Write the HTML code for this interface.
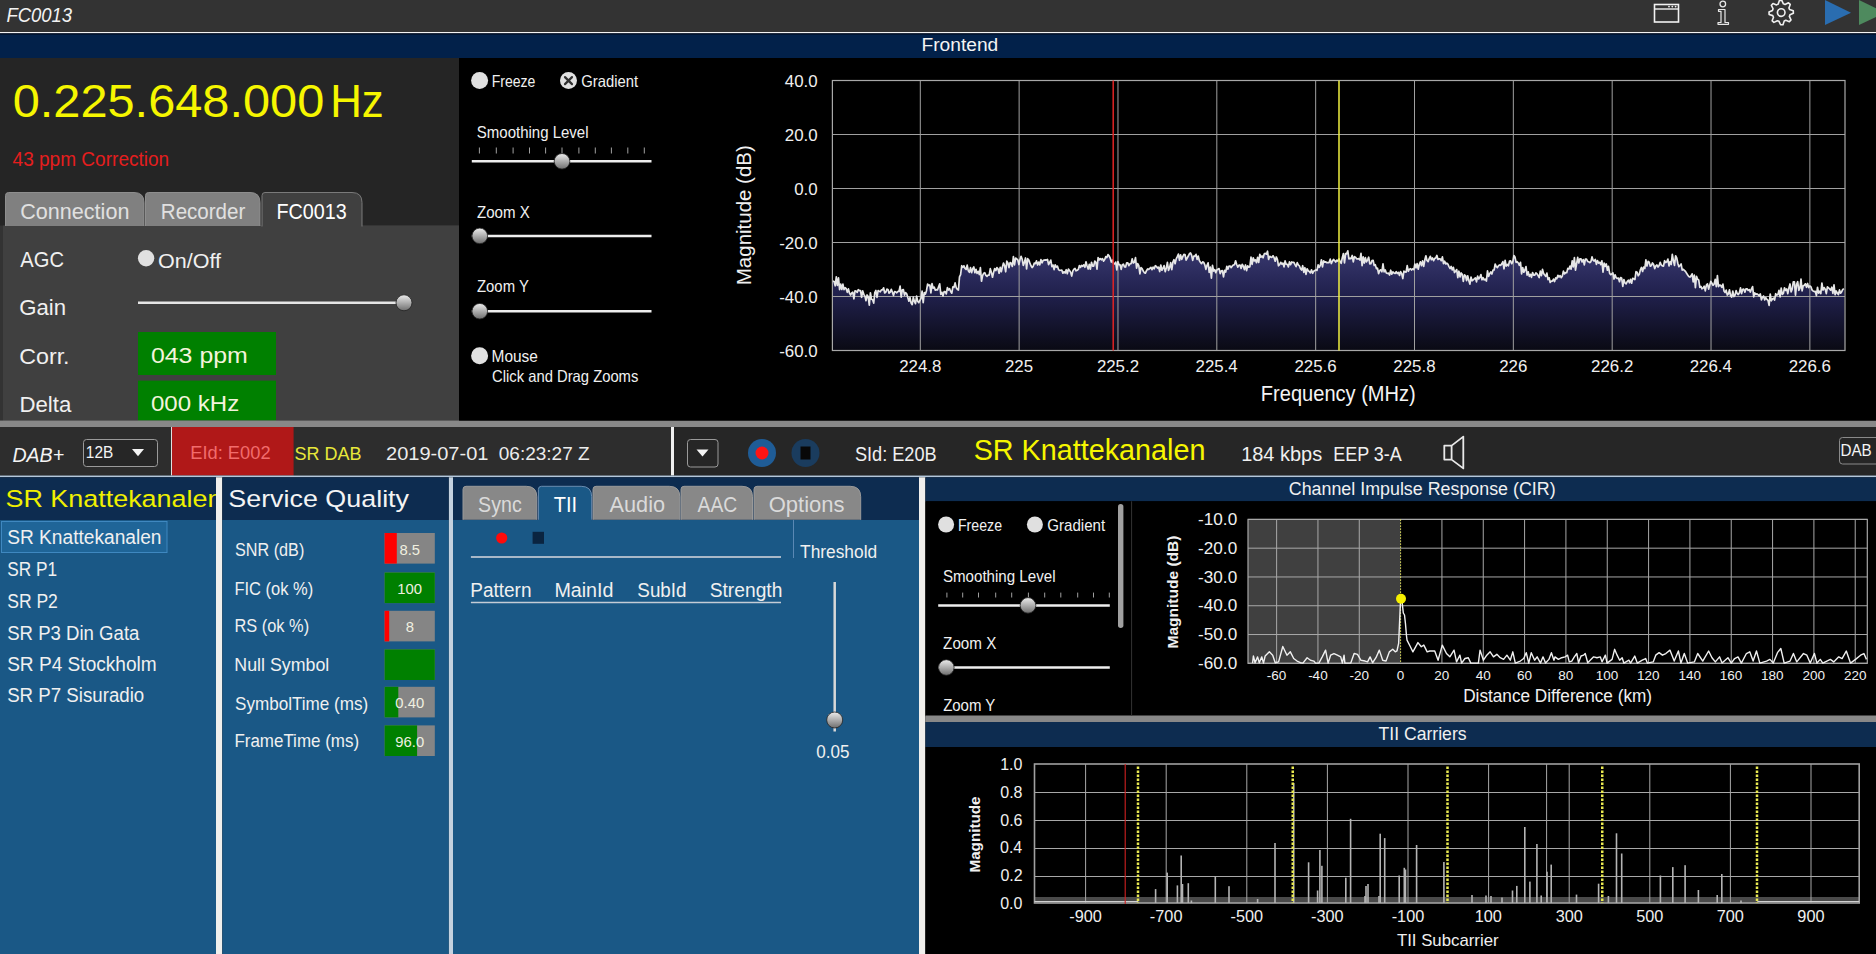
<!DOCTYPE html>
<html><head><meta charset="utf-8"><title>FC0013</title>
<style>html,body{margin:0;padding:0;background:#000;overflow:hidden;width:1876px;height:954px}
svg{display:block} text{font-family:"Liberation Sans",sans-serif;white-space:pre}</style></head>
<body><svg width="1876" height="954" viewBox="0 0 1876 954">
<rect x="0" y="0" width="1876" height="32" fill="#333333" />
<rect x="0" y="32" width="1876" height="1.5" fill="#f4f4f4" />
<rect x="0" y="33.5" width="1876" height="24.5" fill="#02214a" />
<rect x="0" y="33.5" width="1876" height="1" fill="#000a1a" />
<text x="6.43" y="22" font-size="20.35" fill="#f2f2f2" textLength="65.73" lengthAdjust="spacingAndGlyphs" font-style="italic" >FC0013</text>
<text x="921.43" y="50.8" font-size="18.9" fill="#f4f4f4" textLength="76.81" lengthAdjust="spacingAndGlyphs" >Frontend</text>
<rect x="1654.5" y="4.5" width="24" height="17.5" fill="none" stroke="#f2f2f2" stroke-width="1.6"/>
<line x1="1654.5" y1="9" x2="1678.5" y2="9" stroke="#f2f2f2" stroke-width="1.4"/>
<circle cx="1669" cy="6.6" r="0.9" fill="#f2f2f2" />
<circle cx="1672.3" cy="6.6" r="0.9" fill="#f2f2f2" />
<circle cx="1675.6" cy="6.6" r="0.9" fill="#f2f2f2" />
<circle cx="1722.8" cy="4" r="2.8" fill="none" stroke="#e8e8e8" stroke-width="1.3"/>
<path d="M1718.5 9.5 H1725 V22.5 H1728.5 V24.3 H1718 V22.5 H1721 V11.3 H1718.5 Z" fill="none" stroke="#e8e8e8" stroke-width="1.2" stroke-linejoin="round"/>
<path d="M1779.41 0.53 L1781.8 0.41 L1783.39 3.87 L1785.05 4.46 L1788.47 2.8 L1790.24 4.41 L1788.92 7.97 L1789.67 9.57 L1793.27 10.81 L1793.39 13.2 L1789.93 14.79 L1789.34 16.45 L1791 19.87 L1789.39 21.64 L1785.83 20.32 L1784.23 21.07 L1782.99 24.67 L1780.6 24.79 L1779.01 21.33 L1777.35 20.74 L1773.93 22.4 L1772.16 20.79 L1773.48 17.23 L1772.73 15.63 L1769.13 14.39 L1769.01 12 L1772.47 10.41 L1773.06 8.75 L1771.4 5.33 L1773.01 3.56 L1776.57 4.88 L1778.17 4.13 Z" fill="none" stroke="#f0f0f0" stroke-width="1.6" stroke-linejoin="round"/>
<circle cx="1781.2" cy="12.6" r="3.8" fill="none" stroke="#f0f0f0" stroke-width="1.6"/>
<path d="M1825 0 L1851 12.8 L1825 25 Z" fill="#2a6db0"/>
<path d="M1859 0 L1885 12.8 L1859 25 Z" fill="#4e8a5e"/>
<rect x="0" y="58" width="459" height="362.5" fill="#252525" />
<text x="12.7" y="117" font-size="45.79" fill="#f6f600" textLength="311.61" lengthAdjust="spacingAndGlyphs" >0.225.648.000</text>
<text x="330.2" y="117" font-size="45.79" fill="#f6f600" textLength="53.58" lengthAdjust="spacingAndGlyphs" >Hz</text>
<text x="12.56" y="166" font-size="19.77" fill="#e41e1e" textLength="156.67" lengthAdjust="spacingAndGlyphs" >43 ppm Correction</text>
<rect x="0" y="225.5" width="459" height="195" fill="#333333" />
<rect x="3" y="225.5" width="456" height="195" fill="#404040" />
<path d="M5.5 226 V195.5 Q5.5 192.5 8.5 192.5 H134 Q144 192.5 144 202.5 V226 Z" fill="#808080"/>
<path d="M5.5 226 V195.5 Q5.5 192.5 8.5 192.5 H134 Q144 192.5 144 202.5 V226" fill="none" stroke="#8e8e8e" stroke-width="1"/>
<path d="M145.5 226 V195.5 Q145.5 192.5 148.5 192.5 H250 Q260 192.5 260 202.5 V226 Z" fill="#808080"/>
<path d="M145.5 226 V195.5 Q145.5 192.5 148.5 192.5 H250 Q260 192.5 260 202.5 V226" fill="none" stroke="#8e8e8e" stroke-width="1"/>
<path d="M262 226.5 V195.5 Q262 192.5 265 192.5 H352 Q362 192.5 362 202.5 V226.5 Z" fill="#404040"/>
<path d="M262 226.5 V195.5 Q262 192.5 265 192.5 H352 Q362 192.5 362 202.5 V226.5" fill="none" stroke="#7a7a7a" stroke-width="1"/>
<text x="20.3" y="219" font-size="21.37" fill="#e0e0e0" textLength="109.1" lengthAdjust="spacingAndGlyphs" >Connection</text>
<text x="160.81" y="219" font-size="21.37" fill="#e0e0e0" textLength="84.53" lengthAdjust="spacingAndGlyphs" >Recorder</text>
<text x="276.38" y="219" font-size="21.37" fill="#ffffff" textLength="70.29" lengthAdjust="spacingAndGlyphs" >FC0013</text>
<text x="20.36" y="267" font-size="22.82" fill="#f0f0f0" textLength="43.61" lengthAdjust="spacingAndGlyphs" >AGC</text>
<circle cx="146.1" cy="258.3" r="8.2" fill="#e0e0e0" />
<text x="157.99" y="267.9" font-size="19.91" fill="#f0f0f0" textLength="62.98" lengthAdjust="spacingAndGlyphs" >On/Off</text>
<text x="19.28" y="314.9" font-size="22.82" fill="#f0f0f0" textLength="46.86" lengthAdjust="spacingAndGlyphs" >Gain</text>
<line x1="138" y1="302.8" x2="398" y2="302.8" stroke="#e6e6e6" stroke-width="2.6" />
<defs><linearGradient id="knob" x1="0" y1="0" x2="0" y2="1"><stop offset="0" stop-color="#ececec"/><stop offset="0.45" stop-color="#b4b4b4"/><stop offset="1" stop-color="#6e6e6e"/></linearGradient></defs>
<circle cx="404" cy="302.8" r="8" fill="url(#knob)" stroke="#222" stroke-width="0.8"/>
<rect x="138" y="332" width="138" height="43" fill="#008000" />
<rect x="138" y="380.6" width="138" height="40" fill="#008000" />
<text x="19.25" y="363.6" font-size="21.22" fill="#f0f0f0" textLength="50.32" lengthAdjust="spacingAndGlyphs" >Corr.</text>
<text x="19.48" y="411.7" font-size="21.8" fill="#f0f0f0" textLength="51.82" lengthAdjust="spacingAndGlyphs" >Delta</text>
<text x="150.93" y="362.6" font-size="21.8" fill="#f4f4dc" textLength="96.91" lengthAdjust="spacingAndGlyphs" >043 ppm</text>
<text x="150.96" y="410.8" font-size="21.8" fill="#f4f4dc" textLength="88.24" lengthAdjust="spacingAndGlyphs" >000 kHz</text>
<rect x="0" y="420.5" width="1876" height="6.5" fill="#888888" />
<rect x="459" y="58" width="1417" height="362.5" fill="#000000" />
<circle cx="479.6" cy="80.6" r="8.5" fill="#e0e0e0" />
<text x="491.65" y="86.9" font-size="16.72" fill="#f0f0f0" textLength="43.78" lengthAdjust="spacingAndGlyphs" >Freeze</text>
<circle cx="568.5" cy="80.6" r="8.5" fill="#e0e0e0" />
<path d="M565 77.1 L572 84.1 M572 77.1 L565 84.1" stroke="#303030" stroke-width="2.2" stroke-linecap="round"/>
<text x="581.25" y="86.9" font-size="16.72" fill="#f0f0f0" textLength="56.85" lengthAdjust="spacingAndGlyphs" >Gradient</text>
<text x="476.82" y="138.4" font-size="16.72" fill="#f0f0f0" textLength="111.68" lengthAdjust="spacingAndGlyphs" >Smoothing Level</text>
<line x1="479.4" y1="147.5" x2="479.4" y2="153.5" stroke="#a0a0a0" stroke-width="1" />
<line x1="496.3" y1="147.5" x2="496.3" y2="153.5" stroke="#a0a0a0" stroke-width="1" />
<line x1="513.1" y1="147.5" x2="513.1" y2="153.5" stroke="#a0a0a0" stroke-width="1" />
<line x1="529.5" y1="147.5" x2="529.5" y2="153.5" stroke="#a0a0a0" stroke-width="1" />
<line x1="545.6" y1="147.5" x2="545.6" y2="153.5" stroke="#a0a0a0" stroke-width="1" />
<line x1="562" y1="147.5" x2="562" y2="153.5" stroke="#a0a0a0" stroke-width="1" />
<line x1="578.9" y1="147.5" x2="578.9" y2="153.5" stroke="#a0a0a0" stroke-width="1" />
<line x1="595.3" y1="147.5" x2="595.3" y2="153.5" stroke="#a0a0a0" stroke-width="1" />
<line x1="611.4" y1="147.5" x2="611.4" y2="153.5" stroke="#a0a0a0" stroke-width="1" />
<line x1="627.8" y1="147.5" x2="627.8" y2="153.5" stroke="#a0a0a0" stroke-width="1" />
<line x1="644.3" y1="147.5" x2="644.3" y2="153.5" stroke="#a0a0a0" stroke-width="1" />
<line x1="471.8" y1="161.3" x2="651.5" y2="161.3" stroke="#eeeeee" stroke-width="2.5" />
<circle cx="562" cy="161.3" r="7.8" fill="url(#knob)" stroke="#222" stroke-width="0.8"/>
<text x="477.02" y="217.5" font-size="16.72" fill="#f0f0f0" textLength="52.8" lengthAdjust="spacingAndGlyphs" >Zoom X</text>
<line x1="471.8" y1="235.9" x2="651.5" y2="235.9" stroke="#eeeeee" stroke-width="2.5" />
<circle cx="479.8" cy="235.9" r="7.8" fill="url(#knob)" stroke="#222" stroke-width="0.8"/>
<text x="477.03" y="292" font-size="16.72" fill="#f0f0f0" textLength="51.79" lengthAdjust="spacingAndGlyphs" >Zoom Y</text>
<line x1="471.8" y1="311.2" x2="651.5" y2="311.2" stroke="#eeeeee" stroke-width="2.5" />
<circle cx="479.8" cy="311.2" r="7.8" fill="url(#knob)" stroke="#222" stroke-width="0.8"/>
<circle cx="479.6" cy="355.8" r="8.5" fill="#e0e0e0" />
<text x="491.53" y="361.7" font-size="16.72" fill="#f0f0f0" textLength="46.35" lengthAdjust="spacingAndGlyphs" >Mouse</text>
<text x="492.05" y="382" font-size="16.72" fill="#f0f0f0" textLength="146.29" lengthAdjust="spacingAndGlyphs" >Click and Drag Zooms</text>
<text x="0" y="0" font-size="20.3" fill="#f0f0f0" textLength="140" lengthAdjust="spacingAndGlyphs" text-anchor="middle" transform="translate(750.5 215.2) rotate(-90)">Magnitude (dB)</text>
<defs><linearGradient id="spg" x1="0" y1="250" x2="0" y2="350" gradientUnits="userSpaceOnUse"><stop offset="0" stop-color="#38386f"/><stop offset="0.45" stop-color="#20204c"/><stop offset="1" stop-color="#0a0a14"/></linearGradient></defs>
<path d="M833 281.04 L834.1 281.5 L835.2 285.78 L836.3 276.86 L837.4 285.48 L838.5 277.95 L839.6 289.65 L840.7 284.19 L841.8 289.47 L842.9 284.18 L844 289.56 L845.1 287.73 L846.2 288.73 L847.3 292.35 L848.4 288.92 L849.5 293.18 L850.6 295.1 L851.7 292.92 L852.8 292.13 L853.9 298.78 L855 290.83 L856.1 291.04 L857.2 292.34 L858.3 289.69 L859.4 290.65 L860.5 290.61 L861.6 297.28 L862.7 290.9 L863.8 294.38 L864.9 296.13 L866 300.71 L867.1 294.97 L868.2 296.78 L869.3 305.06 L870.4 292.75 L871.5 299.32 L872.6 299.71 L873.7 303.11 L874.8 292.63 L875.9 290.51 L877 297.47 L878.1 290.56 L879.2 291.27 L880.3 291.8 L881.4 289.93 L882.5 289.97 L883.6 287.77 L884.7 292.98 L885.8 292.34 L886.9 289.19 L888 289.46 L889.1 293.14 L890.2 292.15 L891.3 289.29 L892.4 292.21 L893.5 295.52 L894.6 291.52 L895.7 291.84 L896.8 292.79 L897.9 291.47 L899 291.51 L900.1 286.11 L901.2 297.14 L902.3 289.9 L903.4 289.63 L904.5 295.15 L905.6 292.62 L906.7 293.75 L907.8 297.47 L908.9 301.14 L910 297.44 L911.1 303.11 L912.2 304.66 L913.3 297.21 L914.4 301.44 L915.5 303.67 L916.6 296.09 L917.7 301.27 L918.8 302.72 L919.9 300.41 L921 298.5 L922.1 291.06 L923.2 302.58 L924.3 292.51 L925.4 293.98 L926.5 290.67 L927.6 284.11 L928.7 285.52 L929.8 284.91 L930.9 293.01 L932 283.53 L933.1 288.17 L934.2 287.14 L935.3 290.11 L936.4 289.68 L937.5 289.98 L938.6 286.81 L939.7 283.91 L940.8 294.37 L941.9 292.31 L943 295.97 L944.1 291.66 L945.2 291.61 L946.3 293.98 L947.4 287.57 L948.5 290 L949.6 288.7 L950.7 291.48 L951.8 293.22 L952.9 286.83 L954 287.32 L955.1 282.91 L956.2 287.67 L957.3 289.21 L958.4 290.06 L959.5 276.92 L960.6 274.66 L961.7 265.73 L962.8 267.4 L963.9 265.78 L965 268.35 L966.1 269.49 L967.2 265.14 L968.3 270.82 L969.4 272.29 L970.5 267.58 L971.6 272.67 L972.7 268.72 L973.8 266.96 L974.9 272.76 L976 269.28 L977.1 273.41 L978.2 271.31 L979.3 274.55 L980.4 267.71 L981.5 281.21 L982.6 275.7 L983.7 273.25 L984.8 272.75 L985.9 275.36 L987 276.27 L988.1 275.19 L989.2 275.21 L990.3 268.7 L991.4 272.41 L992.5 277.23 L993.6 272.32 L994.7 268.54 L995.8 270.61 L996.9 267.64 L998 268.74 L999.1 273.22 L1000.2 267.31 L1001.3 271.69 L1002.4 267.02 L1003.5 263.06 L1004.6 265.62 L1005.7 271.78 L1006.8 261.11 L1007.9 262.84 L1009 267.68 L1010.1 262.58 L1011.2 263.29 L1012.3 266.45 L1013.4 256.49 L1014.5 264.82 L1015.6 258.05 L1016.7 258.84 L1017.8 259.89 L1018.9 264.52 L1020 259.5 L1021.1 256.4 L1022.2 259.23 L1023.3 265.44 L1024.4 262.41 L1025.5 257.96 L1026.6 268.98 L1027.7 258.7 L1028.8 260.12 L1029.9 263.13 L1031 265.8 L1032.1 267.61 L1033.2 266.17 L1034.3 263.09 L1035.4 263.69 L1036.5 260.85 L1037.6 265.03 L1038.7 262.04 L1039.8 264.82 L1040.9 259.63 L1042 262.83 L1043.1 260.56 L1044.2 260.04 L1045.3 259.9 L1046.4 260.04 L1047.5 259.48 L1048.6 264.55 L1049.7 262.36 L1050.8 260.12 L1051.9 266.62 L1053 265.03 L1054.1 269.58 L1055.2 264.77 L1056.3 267.13 L1057.4 266.1 L1058.5 269.53 L1059.6 270.44 L1060.7 270.27 L1061.8 270.14 L1062.9 273.22 L1064 271.7 L1065.1 273.02 L1066.2 269.71 L1067.3 273.75 L1068.4 269.13 L1069.5 270.5 L1070.6 272.11 L1071.7 276.03 L1072.8 271.1 L1073.9 269.11 L1075 268.37 L1076.1 270.82 L1077.2 270.33 L1078.3 269.42 L1079.4 265.52 L1080.5 267.45 L1081.6 265.45 L1082.7 266.33 L1083.8 264.86 L1084.9 267.26 L1086 261.76 L1087.1 266.06 L1088.2 269.03 L1089.3 264.31 L1090.4 269.22 L1091.5 262.29 L1092.6 266.06 L1093.7 266.03 L1094.8 261.11 L1095.9 262.26 L1097 269.17 L1098.1 257.51 L1099.2 259.86 L1100.3 258.56 L1101.4 259.77 L1102.5 258.59 L1103.6 261.13 L1104.7 259.49 L1105.8 256.58 L1106.9 257.55 L1108 254.66 L1109.1 255.78 L1110.2 258.09 L1111.3 262.05 L1112.4 260.1 L1113.5 263.48 L1114.6 263.93 L1115.7 262.06 L1116.8 269.87 L1117.9 261.61 L1119 264.66 L1120.1 264.88 L1121.2 269.34 L1122.3 264.66 L1123.4 264.16 L1124.5 266.8 L1125.6 267.03 L1126.7 262.8 L1127.8 262.87 L1128.9 265.61 L1130 263.75 L1131.1 263.57 L1132.2 258.75 L1133.3 263.02 L1134.4 262.36 L1135.5 257.59 L1136.6 268.13 L1137.7 263.54 L1138.8 265.61 L1139.9 273.89 L1141 267.51 L1142.1 268.51 L1143.2 271 L1144.3 272.61 L1145.4 273.14 L1146.5 270.68 L1147.6 268.94 L1148.7 269.34 L1149.8 268.28 L1150.9 267.34 L1152 269.72 L1153.1 267.1 L1154.2 268.79 L1155.3 265.68 L1156.4 266.4 L1157.5 267.99 L1158.6 267.15 L1159.7 271.54 L1160.8 265.01 L1161.9 270.24 L1163 268.3 L1164.1 265.6 L1165.2 271.66 L1166.3 267.95 L1167.4 262.39 L1168.5 270.32 L1169.6 267.68 L1170.7 262.65 L1171.8 269.54 L1172.9 262.16 L1174 259.67 L1175.1 263.74 L1176.2 258.88 L1177.3 256.63 L1178.4 254.13 L1179.5 260.27 L1180.6 254.95 L1181.7 259.41 L1182.8 256.67 L1183.9 254.44 L1185 254.52 L1186.1 260.14 L1187.2 258.01 L1188.3 256.02 L1189.4 253.76 L1190.5 253 L1191.6 255.14 L1192.7 260.37 L1193.8 256.14 L1194.9 256.06 L1196 254.34 L1197.1 259.4 L1198.2 256.05 L1199.3 260.47 L1200.4 262.2 L1201.5 263.68 L1202.6 261.9 L1203.7 262.29 L1204.8 264.81 L1205.9 269.35 L1207 265.31 L1208.1 262.87 L1209.2 272.44 L1210.3 267.1 L1211.4 278.19 L1212.5 265.31 L1213.6 271.03 L1214.7 269.6 L1215.8 272.6 L1216.9 269.91 L1218 269.05 L1219.1 268.67 L1220.2 273.66 L1221.3 270.79 L1222.4 270.69 L1223.5 276.79 L1224.6 270.36 L1225.7 272.01 L1226.8 266.29 L1227.9 269.14 L1229 265.98 L1230.1 266.04 L1231.2 267.66 L1232.3 265.96 L1233.4 265.01 L1234.5 264.63 L1235.6 260.78 L1236.7 264.45 L1237.8 267.12 L1238.9 265.04 L1240 265.11 L1241.1 268.45 L1242.2 264.26 L1243.3 266.2 L1244.4 269.57 L1245.5 264.96 L1246.6 270.58 L1247.7 265.84 L1248.8 267.19 L1249.9 266.63 L1251 257.02 L1252.1 264.3 L1253.2 257.82 L1254.3 260.84 L1255.4 259.81 L1256.5 262.64 L1257.6 257.41 L1258.7 262.49 L1259.8 254.36 L1260.9 257.19 L1262 255.94 L1263.1 257.82 L1264.2 254.04 L1265.3 253.32 L1266.4 254.19 L1267.5 251.23 L1268.6 259.5 L1269.7 256.26 L1270.8 257.14 L1271.9 257.3 L1273 255.79 L1274.1 257.67 L1275.2 261.25 L1276.3 256.96 L1277.4 259.29 L1278.5 265.78 L1279.6 264.61 L1280.7 262.3 L1281.8 264.15 L1282.9 263.05 L1284 266.86 L1285.1 260.91 L1286.2 264.16 L1287.3 264.33 L1288.4 266.88 L1289.5 261.76 L1290.6 264.65 L1291.7 261.97 L1292.8 262.43 L1293.9 262.45 L1295 264.7 L1296.1 266.64 L1297.2 262.6 L1298.3 264.93 L1299.4 265.81 L1300.5 268.79 L1301.6 270.06 L1302.7 265.73 L1303.8 272.3 L1304.9 267.74 L1306 274.44 L1307.1 268.78 L1308.2 270.74 L1309.3 271.42 L1310.4 272.93 L1311.5 269.75 L1312.6 273.28 L1313.7 271.18 L1314.8 270.48 L1315.9 269.9 L1317 270.39 L1318.1 264.85 L1319.2 267.31 L1320.3 265.44 L1321.4 259.74 L1322.5 266.94 L1323.6 260.94 L1324.7 262.14 L1325.8 261.83 L1326.9 262.76 L1328 262.58 L1329.1 262.6 L1330.2 259.16 L1331.3 263.52 L1332.4 261.18 L1333.5 259.45 L1334.6 260.59 L1335.7 262.03 L1336.8 260.25 L1337.9 261.08 L1339 258.87 L1340.1 261.79 L1341.2 263.29 L1342.3 257.76 L1343.4 253.58 L1344.5 262.99 L1345.6 253.66 L1346.7 253.82 L1347.8 250.84 L1348.9 258.88 L1350 258.31 L1351.1 258.56 L1352.2 255.44 L1353.3 261.93 L1354.4 256.65 L1355.5 257.22 L1356.6 258.82 L1357.7 258.83 L1358.8 258.66 L1359.9 260.02 L1361 253.41 L1362.1 265.69 L1363.2 256.87 L1364.3 263.03 L1365.4 257.66 L1366.5 261.93 L1367.6 259.84 L1368.7 257.18 L1369.8 263.91 L1370.9 263.77 L1372 260.58 L1373.1 260.3 L1374.2 265.47 L1375.3 264.71 L1376.4 268.63 L1377.5 268.24 L1378.6 273.61 L1379.7 270.41 L1380.8 269.83 L1381.9 271.81 L1383 263.91 L1384.1 271.93 L1385.2 269.89 L1386.3 272.92 L1387.4 273.34 L1388.5 273.04 L1389.6 275.03 L1390.7 270.21 L1391.8 274.24 L1392.9 271.9 L1394 272.98 L1395.1 273.45 L1396.2 271.74 L1397.3 273.54 L1398.4 272.36 L1399.5 275.46 L1400.6 271.58 L1401.7 273.67 L1402.8 278.53 L1403.9 271.16 L1405 271.95 L1406.1 272.04 L1407.2 265.64 L1408.3 271.28 L1409.4 269.18 L1410.5 268.71 L1411.6 270.01 L1412.7 268.78 L1413.8 269.7 L1414.9 264.01 L1416 267.85 L1417.1 263.65 L1418.2 269.21 L1419.3 264.51 L1420.4 261.89 L1421.5 265.74 L1422.6 260.85 L1423.7 266.4 L1424.8 260.03 L1425.9 255.79 L1427 260.5 L1428.1 261.67 L1429.2 258.6 L1430.3 256.26 L1431.4 259.67 L1432.5 258.01 L1433.6 260.61 L1434.7 258.39 L1435.8 257.91 L1436.9 255.42 L1438 259.41 L1439.1 258.83 L1440.2 258.92 L1441.3 260.71 L1442.4 256.87 L1443.5 263.54 L1444.6 261.15 L1445.7 263.93 L1446.8 263.18 L1447.9 264.17 L1449 266.6 L1450.1 268.53 L1451.2 266.39 L1452.3 270 L1453.4 267.38 L1454.5 272.52 L1455.6 271.24 L1456.7 269.56 L1457.8 277.68 L1458.9 271.23 L1460 276.96 L1461.1 272.93 L1462.2 274.35 L1463.3 281.32 L1464.4 274.86 L1465.5 275.72 L1466.6 280.64 L1467.7 275.8 L1468.8 280.55 L1469.9 284.11 L1471 277.01 L1472.1 280.76 L1473.2 279.81 L1474.3 278.89 L1475.4 277.81 L1476.5 281.89 L1477.6 276.17 L1478.7 278.84 L1479.8 277.5 L1480.9 274.52 L1482 279.79 L1483.1 277.74 L1484.2 279.9 L1485.3 279.13 L1486.4 281.13 L1487.5 270.85 L1488.6 276.41 L1489.7 273.71 L1490.8 272.02 L1491.9 274.07 L1493 270.2 L1494.1 270.03 L1495.2 264.02 L1496.3 266.56 L1497.4 267.6 L1498.5 265.7 L1499.6 264.94 L1500.7 265.35 L1501.8 263.88 L1502.9 261.57 L1504 268.77 L1505.1 260.28 L1506.2 266.16 L1507.3 264.38 L1508.4 265.85 L1509.5 261.14 L1510.6 260.84 L1511.7 263.72 L1512.8 261.82 L1513.9 255.59 L1515 257.11 L1516.1 262.37 L1517.2 261.74 L1518.3 263 L1519.4 265.35 L1520.5 262.26 L1521.6 273.87 L1522.7 267.5 L1523.8 272.24 L1524.9 270.13 L1526 266.51 L1527.1 275.08 L1528.2 271.77 L1529.3 276.35 L1530.4 274.34 L1531.5 277.33 L1532.6 272.53 L1533.7 275.21 L1534.8 275.12 L1535.9 272.83 L1537 273.78 L1538.1 275.6 L1539.2 277.71 L1540.3 271.1 L1541.4 275.59 L1542.5 269.36 L1543.6 273.46 L1544.7 275.05 L1545.8 276.33 L1546.9 273.12 L1548 279.57 L1549.1 277.78 L1550.2 282.46 L1551.3 281 L1552.4 281.11 L1553.5 279.08 L1554.6 281.56 L1555.7 277.88 L1556.8 278.77 L1557.9 275.35 L1559 276.98 L1560.1 275.55 L1561.2 277.71 L1562.3 276.07 L1563.4 271.11 L1564.5 273.97 L1565.6 272.61 L1566.7 272.69 L1567.8 268.49 L1568.9 269.12 L1570 266.09 L1571.1 269.14 L1572.2 260.77 L1573.3 266.94 L1574.4 257.69 L1575.5 270.07 L1576.6 263.74 L1577.7 257.38 L1578.8 262.97 L1579.9 258.73 L1581 258.81 L1582.1 261.97 L1583.2 259.53 L1584.3 264.9 L1585.4 259 L1586.5 258.99 L1587.6 261.39 L1588.7 261.76 L1589.8 262.64 L1590.9 261.57 L1592 256.86 L1593.1 260.15 L1594.2 261.03 L1595.3 259.41 L1596.4 264.35 L1597.5 260.61 L1598.6 263.06 L1599.7 262.33 L1600.8 264.51 L1601.9 260.87 L1603 272.2 L1604.1 263.04 L1605.2 266.5 L1606.3 263.93 L1607.4 270.25 L1608.5 266.31 L1609.6 273.17 L1610.7 274.7 L1611.8 274.1 L1612.9 272.94 L1614 279.02 L1615.1 274.79 L1616.2 277.72 L1617.3 278.42 L1618.4 278.1 L1619.5 281.73 L1620.6 277.5 L1621.7 278.29 L1622.8 286.39 L1623.9 279.56 L1625 282.95 L1626.1 283.89 L1627.2 281.57 L1628.3 280.27 L1629.4 282.75 L1630.5 279.38 L1631.6 283.23 L1632.7 278.28 L1633.8 278.72 L1634.9 279.56 L1636 271.61 L1637.1 272.25 L1638.2 275.77 L1639.3 274.18 L1640.4 269.84 L1641.5 267.4 L1642.6 271.5 L1643.7 267.07 L1644.8 268.52 L1645.9 259.87 L1647 266.03 L1648.1 261.35 L1649.2 262.26 L1650.3 266.16 L1651.4 265.48 L1652.5 262.91 L1653.6 264.57 L1654.7 268.56 L1655.8 265.85 L1656.9 264.99 L1658 267.06 L1659.1 265.48 L1660.2 262.37 L1661.3 265.01 L1662.4 265.92 L1663.5 266.03 L1664.6 260.73 L1665.7 262.62 L1666.8 261.9 L1667.9 259.07 L1669 265.95 L1670.1 261.62 L1671.2 264.53 L1672.3 254.29 L1673.4 260.62 L1674.5 265.34 L1675.6 255.74 L1676.7 257.79 L1677.8 263.21 L1678.9 266.64 L1680 265.48 L1681.1 263.9 L1682.2 270.09 L1683.3 269.41 L1684.4 270.48 L1685.5 271.42 L1686.6 273.32 L1687.7 274.92 L1688.8 276.53 L1689.9 277.09 L1691 275.89 L1692.1 273.8 L1693.2 281.97 L1694.3 275.14 L1695.4 287.75 L1696.5 276.3 L1697.6 279.31 L1698.7 279.96 L1699.8 287.27 L1700.9 286.42 L1702 288.81 L1703.1 288.07 L1704.2 286.13 L1705.3 290.85 L1706.4 285.09 L1707.5 283.83 L1708.6 289.2 L1709.7 285.24 L1710.8 281.37 L1711.9 283.27 L1713 285.31 L1714.1 284.13 L1715.2 279.34 L1716.3 286.7 L1717.4 275.66 L1718.5 286.56 L1719.6 285 L1720.7 285.41 L1721.8 287.38 L1722.9 284.15 L1724 290.93 L1725.1 292.5 L1726.2 290.12 L1727.3 295.03 L1728.4 293.96 L1729.5 289.84 L1730.6 295.83 L1731.7 297.18 L1732.8 291.13 L1733.9 296.6 L1735 295.14 L1736.1 290.61 L1737.2 293.54 L1738.3 294.51 L1739.4 292.74 L1740.5 287.91 L1741.6 293.59 L1742.7 289.29 L1743.8 289.22 L1744.9 292.12 L1746 288.84 L1747.1 288.75 L1748.2 290.43 L1749.3 289.59 L1750.4 292.09 L1751.5 288.77 L1752.6 286.56 L1753.7 296.83 L1754.8 292.89 L1755.9 294.42 L1757 293.8 L1758.1 294.71 L1759.2 295.99 L1760.3 293.97 L1761.4 299.95 L1762.5 297.2 L1763.6 296.01 L1764.7 300 L1765.8 297.64 L1766.9 299.31 L1768 300.33 L1769.1 305.44 L1770.2 294 L1771.3 300.8 L1772.4 298.97 L1773.5 298.07 L1774.6 300.2 L1775.7 293.73 L1776.8 295.01 L1777.9 294.52 L1779 290.27 L1780.1 296.97 L1781.2 288.05 L1782.3 294.47 L1783.4 293.41 L1784.5 287.76 L1785.6 290.44 L1786.7 288.91 L1787.8 293.7 L1788.9 287.97 L1790 283.99 L1791.1 292 L1792.2 289.08 L1793.3 281.81 L1794.4 281.81 L1795.5 295.23 L1796.6 284.43 L1797.7 281.69 L1798.8 290.41 L1799.9 288.44 L1801 278.98 L1802.1 290.94 L1803.2 285.71 L1804.3 285.35 L1805.4 283.79 L1806.5 287.27 L1807.6 283.49 L1808.7 287.6 L1809.8 285.9 L1810.9 286.67 L1812 289.86 L1813.1 291.02 L1814.2 291.57 L1815.3 291.44 L1816.4 295.58 L1817.5 287.24 L1818.6 293.18 L1819.7 291.26 L1820.8 293.57 L1821.9 283 L1823 290.07 L1824.1 287.61 L1825.2 289.13 L1826.3 293.6 L1827.4 286.76 L1828.5 287.82 L1829.6 288.87 L1830.7 290.18 L1831.8 287.19 L1832.9 293.43 L1834 284.84 L1835.1 294.69 L1836.2 290.97 L1837.3 293.24 L1838.4 294.51 L1839.5 289.91 L1840.6 293.18 L1841.7 291.71 L1842.8 289.4 L1843.9 288.71 L1845 350.5 L833 350.5 Z" fill="url(#spg)"/>
<line x1="832.4" y1="80.5" x2="1845" y2="80.5" stroke="#a0a0a0" stroke-width="1" />
<line x1="832.4" y1="134.5" x2="1845" y2="134.5" stroke="#a0a0a0" stroke-width="1" />
<line x1="832.4" y1="188.5" x2="1845" y2="188.5" stroke="#a0a0a0" stroke-width="1" />
<line x1="832.4" y1="242.5" x2="1845" y2="242.5" stroke="#a0a0a0" stroke-width="1" />
<line x1="832.4" y1="296.5" x2="1845" y2="296.5" stroke="#a0a0a0" stroke-width="1" />
<line x1="832.4" y1="350.5" x2="1845" y2="350.5" stroke="#a0a0a0" stroke-width="1" />
<line x1="920.3" y1="80.5" x2="920.3" y2="350.5" stroke="#a0a0a0" stroke-width="1" />
<line x1="1019.14" y1="80.5" x2="1019.14" y2="350.5" stroke="#a0a0a0" stroke-width="1" />
<line x1="1117.98" y1="80.5" x2="1117.98" y2="350.5" stroke="#a0a0a0" stroke-width="1" />
<line x1="1216.82" y1="80.5" x2="1216.82" y2="350.5" stroke="#a0a0a0" stroke-width="1" />
<line x1="1315.66" y1="80.5" x2="1315.66" y2="350.5" stroke="#a0a0a0" stroke-width="1" />
<line x1="1414.5" y1="80.5" x2="1414.5" y2="350.5" stroke="#a0a0a0" stroke-width="1" />
<line x1="1513.34" y1="80.5" x2="1513.34" y2="350.5" stroke="#a0a0a0" stroke-width="1" />
<line x1="1612.18" y1="80.5" x2="1612.18" y2="350.5" stroke="#a0a0a0" stroke-width="1" />
<line x1="1711.02" y1="80.5" x2="1711.02" y2="350.5" stroke="#a0a0a0" stroke-width="1" />
<line x1="1809.86" y1="80.5" x2="1809.86" y2="350.5" stroke="#a0a0a0" stroke-width="1" />
<rect x="832.4" y="80.5" width="1012.6" height="270" fill="none" stroke="#a8a8a8" stroke-width="1.2"/>
<path d="M833 281.04 L834.1 281.5 L835.2 285.78 L836.3 276.86 L837.4 285.48 L838.5 277.95 L839.6 289.65 L840.7 284.19 L841.8 289.47 L842.9 284.18 L844 289.56 L845.1 287.73 L846.2 288.73 L847.3 292.35 L848.4 288.92 L849.5 293.18 L850.6 295.1 L851.7 292.92 L852.8 292.13 L853.9 298.78 L855 290.83 L856.1 291.04 L857.2 292.34 L858.3 289.69 L859.4 290.65 L860.5 290.61 L861.6 297.28 L862.7 290.9 L863.8 294.38 L864.9 296.13 L866 300.71 L867.1 294.97 L868.2 296.78 L869.3 305.06 L870.4 292.75 L871.5 299.32 L872.6 299.71 L873.7 303.11 L874.8 292.63 L875.9 290.51 L877 297.47 L878.1 290.56 L879.2 291.27 L880.3 291.8 L881.4 289.93 L882.5 289.97 L883.6 287.77 L884.7 292.98 L885.8 292.34 L886.9 289.19 L888 289.46 L889.1 293.14 L890.2 292.15 L891.3 289.29 L892.4 292.21 L893.5 295.52 L894.6 291.52 L895.7 291.84 L896.8 292.79 L897.9 291.47 L899 291.51 L900.1 286.11 L901.2 297.14 L902.3 289.9 L903.4 289.63 L904.5 295.15 L905.6 292.62 L906.7 293.75 L907.8 297.47 L908.9 301.14 L910 297.44 L911.1 303.11 L912.2 304.66 L913.3 297.21 L914.4 301.44 L915.5 303.67 L916.6 296.09 L917.7 301.27 L918.8 302.72 L919.9 300.41 L921 298.5 L922.1 291.06 L923.2 302.58 L924.3 292.51 L925.4 293.98 L926.5 290.67 L927.6 284.11 L928.7 285.52 L929.8 284.91 L930.9 293.01 L932 283.53 L933.1 288.17 L934.2 287.14 L935.3 290.11 L936.4 289.68 L937.5 289.98 L938.6 286.81 L939.7 283.91 L940.8 294.37 L941.9 292.31 L943 295.97 L944.1 291.66 L945.2 291.61 L946.3 293.98 L947.4 287.57 L948.5 290 L949.6 288.7 L950.7 291.48 L951.8 293.22 L952.9 286.83 L954 287.32 L955.1 282.91 L956.2 287.67 L957.3 289.21 L958.4 290.06 L959.5 276.92 L960.6 274.66 L961.7 265.73 L962.8 267.4 L963.9 265.78 L965 268.35 L966.1 269.49 L967.2 265.14 L968.3 270.82 L969.4 272.29 L970.5 267.58 L971.6 272.67 L972.7 268.72 L973.8 266.96 L974.9 272.76 L976 269.28 L977.1 273.41 L978.2 271.31 L979.3 274.55 L980.4 267.71 L981.5 281.21 L982.6 275.7 L983.7 273.25 L984.8 272.75 L985.9 275.36 L987 276.27 L988.1 275.19 L989.2 275.21 L990.3 268.7 L991.4 272.41 L992.5 277.23 L993.6 272.32 L994.7 268.54 L995.8 270.61 L996.9 267.64 L998 268.74 L999.1 273.22 L1000.2 267.31 L1001.3 271.69 L1002.4 267.02 L1003.5 263.06 L1004.6 265.62 L1005.7 271.78 L1006.8 261.11 L1007.9 262.84 L1009 267.68 L1010.1 262.58 L1011.2 263.29 L1012.3 266.45 L1013.4 256.49 L1014.5 264.82 L1015.6 258.05 L1016.7 258.84 L1017.8 259.89 L1018.9 264.52 L1020 259.5 L1021.1 256.4 L1022.2 259.23 L1023.3 265.44 L1024.4 262.41 L1025.5 257.96 L1026.6 268.98 L1027.7 258.7 L1028.8 260.12 L1029.9 263.13 L1031 265.8 L1032.1 267.61 L1033.2 266.17 L1034.3 263.09 L1035.4 263.69 L1036.5 260.85 L1037.6 265.03 L1038.7 262.04 L1039.8 264.82 L1040.9 259.63 L1042 262.83 L1043.1 260.56 L1044.2 260.04 L1045.3 259.9 L1046.4 260.04 L1047.5 259.48 L1048.6 264.55 L1049.7 262.36 L1050.8 260.12 L1051.9 266.62 L1053 265.03 L1054.1 269.58 L1055.2 264.77 L1056.3 267.13 L1057.4 266.1 L1058.5 269.53 L1059.6 270.44 L1060.7 270.27 L1061.8 270.14 L1062.9 273.22 L1064 271.7 L1065.1 273.02 L1066.2 269.71 L1067.3 273.75 L1068.4 269.13 L1069.5 270.5 L1070.6 272.11 L1071.7 276.03 L1072.8 271.1 L1073.9 269.11 L1075 268.37 L1076.1 270.82 L1077.2 270.33 L1078.3 269.42 L1079.4 265.52 L1080.5 267.45 L1081.6 265.45 L1082.7 266.33 L1083.8 264.86 L1084.9 267.26 L1086 261.76 L1087.1 266.06 L1088.2 269.03 L1089.3 264.31 L1090.4 269.22 L1091.5 262.29 L1092.6 266.06 L1093.7 266.03 L1094.8 261.11 L1095.9 262.26 L1097 269.17 L1098.1 257.51 L1099.2 259.86 L1100.3 258.56 L1101.4 259.77 L1102.5 258.59 L1103.6 261.13 L1104.7 259.49 L1105.8 256.58 L1106.9 257.55 L1108 254.66 L1109.1 255.78 L1110.2 258.09 L1111.3 262.05 L1112.4 260.1 L1113.5 263.48 L1114.6 263.93 L1115.7 262.06 L1116.8 269.87 L1117.9 261.61 L1119 264.66 L1120.1 264.88 L1121.2 269.34 L1122.3 264.66 L1123.4 264.16 L1124.5 266.8 L1125.6 267.03 L1126.7 262.8 L1127.8 262.87 L1128.9 265.61 L1130 263.75 L1131.1 263.57 L1132.2 258.75 L1133.3 263.02 L1134.4 262.36 L1135.5 257.59 L1136.6 268.13 L1137.7 263.54 L1138.8 265.61 L1139.9 273.89 L1141 267.51 L1142.1 268.51 L1143.2 271 L1144.3 272.61 L1145.4 273.14 L1146.5 270.68 L1147.6 268.94 L1148.7 269.34 L1149.8 268.28 L1150.9 267.34 L1152 269.72 L1153.1 267.1 L1154.2 268.79 L1155.3 265.68 L1156.4 266.4 L1157.5 267.99 L1158.6 267.15 L1159.7 271.54 L1160.8 265.01 L1161.9 270.24 L1163 268.3 L1164.1 265.6 L1165.2 271.66 L1166.3 267.95 L1167.4 262.39 L1168.5 270.32 L1169.6 267.68 L1170.7 262.65 L1171.8 269.54 L1172.9 262.16 L1174 259.67 L1175.1 263.74 L1176.2 258.88 L1177.3 256.63 L1178.4 254.13 L1179.5 260.27 L1180.6 254.95 L1181.7 259.41 L1182.8 256.67 L1183.9 254.44 L1185 254.52 L1186.1 260.14 L1187.2 258.01 L1188.3 256.02 L1189.4 253.76 L1190.5 253 L1191.6 255.14 L1192.7 260.37 L1193.8 256.14 L1194.9 256.06 L1196 254.34 L1197.1 259.4 L1198.2 256.05 L1199.3 260.47 L1200.4 262.2 L1201.5 263.68 L1202.6 261.9 L1203.7 262.29 L1204.8 264.81 L1205.9 269.35 L1207 265.31 L1208.1 262.87 L1209.2 272.44 L1210.3 267.1 L1211.4 278.19 L1212.5 265.31 L1213.6 271.03 L1214.7 269.6 L1215.8 272.6 L1216.9 269.91 L1218 269.05 L1219.1 268.67 L1220.2 273.66 L1221.3 270.79 L1222.4 270.69 L1223.5 276.79 L1224.6 270.36 L1225.7 272.01 L1226.8 266.29 L1227.9 269.14 L1229 265.98 L1230.1 266.04 L1231.2 267.66 L1232.3 265.96 L1233.4 265.01 L1234.5 264.63 L1235.6 260.78 L1236.7 264.45 L1237.8 267.12 L1238.9 265.04 L1240 265.11 L1241.1 268.45 L1242.2 264.26 L1243.3 266.2 L1244.4 269.57 L1245.5 264.96 L1246.6 270.58 L1247.7 265.84 L1248.8 267.19 L1249.9 266.63 L1251 257.02 L1252.1 264.3 L1253.2 257.82 L1254.3 260.84 L1255.4 259.81 L1256.5 262.64 L1257.6 257.41 L1258.7 262.49 L1259.8 254.36 L1260.9 257.19 L1262 255.94 L1263.1 257.82 L1264.2 254.04 L1265.3 253.32 L1266.4 254.19 L1267.5 251.23 L1268.6 259.5 L1269.7 256.26 L1270.8 257.14 L1271.9 257.3 L1273 255.79 L1274.1 257.67 L1275.2 261.25 L1276.3 256.96 L1277.4 259.29 L1278.5 265.78 L1279.6 264.61 L1280.7 262.3 L1281.8 264.15 L1282.9 263.05 L1284 266.86 L1285.1 260.91 L1286.2 264.16 L1287.3 264.33 L1288.4 266.88 L1289.5 261.76 L1290.6 264.65 L1291.7 261.97 L1292.8 262.43 L1293.9 262.45 L1295 264.7 L1296.1 266.64 L1297.2 262.6 L1298.3 264.93 L1299.4 265.81 L1300.5 268.79 L1301.6 270.06 L1302.7 265.73 L1303.8 272.3 L1304.9 267.74 L1306 274.44 L1307.1 268.78 L1308.2 270.74 L1309.3 271.42 L1310.4 272.93 L1311.5 269.75 L1312.6 273.28 L1313.7 271.18 L1314.8 270.48 L1315.9 269.9 L1317 270.39 L1318.1 264.85 L1319.2 267.31 L1320.3 265.44 L1321.4 259.74 L1322.5 266.94 L1323.6 260.94 L1324.7 262.14 L1325.8 261.83 L1326.9 262.76 L1328 262.58 L1329.1 262.6 L1330.2 259.16 L1331.3 263.52 L1332.4 261.18 L1333.5 259.45 L1334.6 260.59 L1335.7 262.03 L1336.8 260.25 L1337.9 261.08 L1339 258.87 L1340.1 261.79 L1341.2 263.29 L1342.3 257.76 L1343.4 253.58 L1344.5 262.99 L1345.6 253.66 L1346.7 253.82 L1347.8 250.84 L1348.9 258.88 L1350 258.31 L1351.1 258.56 L1352.2 255.44 L1353.3 261.93 L1354.4 256.65 L1355.5 257.22 L1356.6 258.82 L1357.7 258.83 L1358.8 258.66 L1359.9 260.02 L1361 253.41 L1362.1 265.69 L1363.2 256.87 L1364.3 263.03 L1365.4 257.66 L1366.5 261.93 L1367.6 259.84 L1368.7 257.18 L1369.8 263.91 L1370.9 263.77 L1372 260.58 L1373.1 260.3 L1374.2 265.47 L1375.3 264.71 L1376.4 268.63 L1377.5 268.24 L1378.6 273.61 L1379.7 270.41 L1380.8 269.83 L1381.9 271.81 L1383 263.91 L1384.1 271.93 L1385.2 269.89 L1386.3 272.92 L1387.4 273.34 L1388.5 273.04 L1389.6 275.03 L1390.7 270.21 L1391.8 274.24 L1392.9 271.9 L1394 272.98 L1395.1 273.45 L1396.2 271.74 L1397.3 273.54 L1398.4 272.36 L1399.5 275.46 L1400.6 271.58 L1401.7 273.67 L1402.8 278.53 L1403.9 271.16 L1405 271.95 L1406.1 272.04 L1407.2 265.64 L1408.3 271.28 L1409.4 269.18 L1410.5 268.71 L1411.6 270.01 L1412.7 268.78 L1413.8 269.7 L1414.9 264.01 L1416 267.85 L1417.1 263.65 L1418.2 269.21 L1419.3 264.51 L1420.4 261.89 L1421.5 265.74 L1422.6 260.85 L1423.7 266.4 L1424.8 260.03 L1425.9 255.79 L1427 260.5 L1428.1 261.67 L1429.2 258.6 L1430.3 256.26 L1431.4 259.67 L1432.5 258.01 L1433.6 260.61 L1434.7 258.39 L1435.8 257.91 L1436.9 255.42 L1438 259.41 L1439.1 258.83 L1440.2 258.92 L1441.3 260.71 L1442.4 256.87 L1443.5 263.54 L1444.6 261.15 L1445.7 263.93 L1446.8 263.18 L1447.9 264.17 L1449 266.6 L1450.1 268.53 L1451.2 266.39 L1452.3 270 L1453.4 267.38 L1454.5 272.52 L1455.6 271.24 L1456.7 269.56 L1457.8 277.68 L1458.9 271.23 L1460 276.96 L1461.1 272.93 L1462.2 274.35 L1463.3 281.32 L1464.4 274.86 L1465.5 275.72 L1466.6 280.64 L1467.7 275.8 L1468.8 280.55 L1469.9 284.11 L1471 277.01 L1472.1 280.76 L1473.2 279.81 L1474.3 278.89 L1475.4 277.81 L1476.5 281.89 L1477.6 276.17 L1478.7 278.84 L1479.8 277.5 L1480.9 274.52 L1482 279.79 L1483.1 277.74 L1484.2 279.9 L1485.3 279.13 L1486.4 281.13 L1487.5 270.85 L1488.6 276.41 L1489.7 273.71 L1490.8 272.02 L1491.9 274.07 L1493 270.2 L1494.1 270.03 L1495.2 264.02 L1496.3 266.56 L1497.4 267.6 L1498.5 265.7 L1499.6 264.94 L1500.7 265.35 L1501.8 263.88 L1502.9 261.57 L1504 268.77 L1505.1 260.28 L1506.2 266.16 L1507.3 264.38 L1508.4 265.85 L1509.5 261.14 L1510.6 260.84 L1511.7 263.72 L1512.8 261.82 L1513.9 255.59 L1515 257.11 L1516.1 262.37 L1517.2 261.74 L1518.3 263 L1519.4 265.35 L1520.5 262.26 L1521.6 273.87 L1522.7 267.5 L1523.8 272.24 L1524.9 270.13 L1526 266.51 L1527.1 275.08 L1528.2 271.77 L1529.3 276.35 L1530.4 274.34 L1531.5 277.33 L1532.6 272.53 L1533.7 275.21 L1534.8 275.12 L1535.9 272.83 L1537 273.78 L1538.1 275.6 L1539.2 277.71 L1540.3 271.1 L1541.4 275.59 L1542.5 269.36 L1543.6 273.46 L1544.7 275.05 L1545.8 276.33 L1546.9 273.12 L1548 279.57 L1549.1 277.78 L1550.2 282.46 L1551.3 281 L1552.4 281.11 L1553.5 279.08 L1554.6 281.56 L1555.7 277.88 L1556.8 278.77 L1557.9 275.35 L1559 276.98 L1560.1 275.55 L1561.2 277.71 L1562.3 276.07 L1563.4 271.11 L1564.5 273.97 L1565.6 272.61 L1566.7 272.69 L1567.8 268.49 L1568.9 269.12 L1570 266.09 L1571.1 269.14 L1572.2 260.77 L1573.3 266.94 L1574.4 257.69 L1575.5 270.07 L1576.6 263.74 L1577.7 257.38 L1578.8 262.97 L1579.9 258.73 L1581 258.81 L1582.1 261.97 L1583.2 259.53 L1584.3 264.9 L1585.4 259 L1586.5 258.99 L1587.6 261.39 L1588.7 261.76 L1589.8 262.64 L1590.9 261.57 L1592 256.86 L1593.1 260.15 L1594.2 261.03 L1595.3 259.41 L1596.4 264.35 L1597.5 260.61 L1598.6 263.06 L1599.7 262.33 L1600.8 264.51 L1601.9 260.87 L1603 272.2 L1604.1 263.04 L1605.2 266.5 L1606.3 263.93 L1607.4 270.25 L1608.5 266.31 L1609.6 273.17 L1610.7 274.7 L1611.8 274.1 L1612.9 272.94 L1614 279.02 L1615.1 274.79 L1616.2 277.72 L1617.3 278.42 L1618.4 278.1 L1619.5 281.73 L1620.6 277.5 L1621.7 278.29 L1622.8 286.39 L1623.9 279.56 L1625 282.95 L1626.1 283.89 L1627.2 281.57 L1628.3 280.27 L1629.4 282.75 L1630.5 279.38 L1631.6 283.23 L1632.7 278.28 L1633.8 278.72 L1634.9 279.56 L1636 271.61 L1637.1 272.25 L1638.2 275.77 L1639.3 274.18 L1640.4 269.84 L1641.5 267.4 L1642.6 271.5 L1643.7 267.07 L1644.8 268.52 L1645.9 259.87 L1647 266.03 L1648.1 261.35 L1649.2 262.26 L1650.3 266.16 L1651.4 265.48 L1652.5 262.91 L1653.6 264.57 L1654.7 268.56 L1655.8 265.85 L1656.9 264.99 L1658 267.06 L1659.1 265.48 L1660.2 262.37 L1661.3 265.01 L1662.4 265.92 L1663.5 266.03 L1664.6 260.73 L1665.7 262.62 L1666.8 261.9 L1667.9 259.07 L1669 265.95 L1670.1 261.62 L1671.2 264.53 L1672.3 254.29 L1673.4 260.62 L1674.5 265.34 L1675.6 255.74 L1676.7 257.79 L1677.8 263.21 L1678.9 266.64 L1680 265.48 L1681.1 263.9 L1682.2 270.09 L1683.3 269.41 L1684.4 270.48 L1685.5 271.42 L1686.6 273.32 L1687.7 274.92 L1688.8 276.53 L1689.9 277.09 L1691 275.89 L1692.1 273.8 L1693.2 281.97 L1694.3 275.14 L1695.4 287.75 L1696.5 276.3 L1697.6 279.31 L1698.7 279.96 L1699.8 287.27 L1700.9 286.42 L1702 288.81 L1703.1 288.07 L1704.2 286.13 L1705.3 290.85 L1706.4 285.09 L1707.5 283.83 L1708.6 289.2 L1709.7 285.24 L1710.8 281.37 L1711.9 283.27 L1713 285.31 L1714.1 284.13 L1715.2 279.34 L1716.3 286.7 L1717.4 275.66 L1718.5 286.56 L1719.6 285 L1720.7 285.41 L1721.8 287.38 L1722.9 284.15 L1724 290.93 L1725.1 292.5 L1726.2 290.12 L1727.3 295.03 L1728.4 293.96 L1729.5 289.84 L1730.6 295.83 L1731.7 297.18 L1732.8 291.13 L1733.9 296.6 L1735 295.14 L1736.1 290.61 L1737.2 293.54 L1738.3 294.51 L1739.4 292.74 L1740.5 287.91 L1741.6 293.59 L1742.7 289.29 L1743.8 289.22 L1744.9 292.12 L1746 288.84 L1747.1 288.75 L1748.2 290.43 L1749.3 289.59 L1750.4 292.09 L1751.5 288.77 L1752.6 286.56 L1753.7 296.83 L1754.8 292.89 L1755.9 294.42 L1757 293.8 L1758.1 294.71 L1759.2 295.99 L1760.3 293.97 L1761.4 299.95 L1762.5 297.2 L1763.6 296.01 L1764.7 300 L1765.8 297.64 L1766.9 299.31 L1768 300.33 L1769.1 305.44 L1770.2 294 L1771.3 300.8 L1772.4 298.97 L1773.5 298.07 L1774.6 300.2 L1775.7 293.73 L1776.8 295.01 L1777.9 294.52 L1779 290.27 L1780.1 296.97 L1781.2 288.05 L1782.3 294.47 L1783.4 293.41 L1784.5 287.76 L1785.6 290.44 L1786.7 288.91 L1787.8 293.7 L1788.9 287.97 L1790 283.99 L1791.1 292 L1792.2 289.08 L1793.3 281.81 L1794.4 281.81 L1795.5 295.23 L1796.6 284.43 L1797.7 281.69 L1798.8 290.41 L1799.9 288.44 L1801 278.98 L1802.1 290.94 L1803.2 285.71 L1804.3 285.35 L1805.4 283.79 L1806.5 287.27 L1807.6 283.49 L1808.7 287.6 L1809.8 285.9 L1810.9 286.67 L1812 289.86 L1813.1 291.02 L1814.2 291.57 L1815.3 291.44 L1816.4 295.58 L1817.5 287.24 L1818.6 293.18 L1819.7 291.26 L1820.8 293.57 L1821.9 283 L1823 290.07 L1824.1 287.61 L1825.2 289.13 L1826.3 293.6 L1827.4 286.76 L1828.5 287.82 L1829.6 288.87 L1830.7 290.18 L1831.8 287.19 L1832.9 293.43 L1834 284.84 L1835.1 294.69 L1836.2 290.97 L1837.3 293.24 L1838.4 294.51 L1839.5 289.91 L1840.6 293.18 L1841.7 291.71 L1842.8 289.4 L1843.9 288.71" fill="none" stroke="#e6e6e6" stroke-width="1.7" stroke-linejoin="round"/>
<line x1="1113.2" y1="80.5" x2="1113.2" y2="350.5" stroke="#e02424" stroke-width="1.5" />
<line x1="1339" y1="80.5" x2="1339" y2="350.5" stroke="#f0f040" stroke-width="1.5" />
<text x="784.84" y="86.5" font-size="16.86" fill="#f0f0f0" textLength="32.82" lengthAdjust="spacingAndGlyphs" >40.0</text>
<text x="784.84" y="140.5" font-size="16.86" fill="#f0f0f0" textLength="32.82" lengthAdjust="spacingAndGlyphs" >20.0</text>
<text x="794.22" y="194.5" font-size="16.86" fill="#f0f0f0" textLength="23.44" lengthAdjust="spacingAndGlyphs" >0.0</text>
<text x="779.23" y="248.5" font-size="16.86" fill="#f0f0f0" textLength="38.43" lengthAdjust="spacingAndGlyphs" >-20.0</text>
<text x="779.23" y="302.5" font-size="16.86" fill="#f0f0f0" textLength="38.43" lengthAdjust="spacingAndGlyphs" >-40.0</text>
<text x="779.23" y="356.5" font-size="16.86" fill="#f0f0f0" textLength="38.43" lengthAdjust="spacingAndGlyphs" >-60.0</text>
<text x="899.15" y="371.6" font-size="16.86" fill="#f0f0f0" textLength="42.19" lengthAdjust="spacingAndGlyphs" >224.8</text>
<text x="1005" y="371.6" font-size="16.86" fill="#f0f0f0" textLength="28.13" lengthAdjust="spacingAndGlyphs" >225</text>
<text x="1096.88" y="371.6" font-size="16.86" fill="#f0f0f0" textLength="42.19" lengthAdjust="spacingAndGlyphs" >225.2</text>
<text x="1195.55" y="371.6" font-size="16.86" fill="#f0f0f0" textLength="42.19" lengthAdjust="spacingAndGlyphs" >225.4</text>
<text x="1294.51" y="371.6" font-size="16.86" fill="#f0f0f0" textLength="42.19" lengthAdjust="spacingAndGlyphs" >225.6</text>
<text x="1393.35" y="371.6" font-size="16.86" fill="#f0f0f0" textLength="42.19" lengthAdjust="spacingAndGlyphs" >225.8</text>
<text x="1499.22" y="371.6" font-size="16.86" fill="#f0f0f0" textLength="28.13" lengthAdjust="spacingAndGlyphs" >226</text>
<text x="1591.08" y="371.6" font-size="16.86" fill="#f0f0f0" textLength="42.19" lengthAdjust="spacingAndGlyphs" >226.2</text>
<text x="1689.75" y="371.6" font-size="16.86" fill="#f0f0f0" textLength="42.19" lengthAdjust="spacingAndGlyphs" >226.4</text>
<text x="1788.71" y="371.6" font-size="16.86" fill="#f0f0f0" textLength="42.19" lengthAdjust="spacingAndGlyphs" >226.6</text>
<text x="1260.85" y="401.3" font-size="21.8" fill="#f4f4f4" textLength="154.89" lengthAdjust="spacingAndGlyphs" >Frequency (MHz)</text>
<rect x="0" y="427" width="671" height="48.5" fill="#2d2d2d" />
<rect x="671" y="427" width="3" height="48.5" fill="#f0f0f0" />
<rect x="674" y="427" width="1202" height="48.5" fill="#262626" />
<text x="12.4" y="461.6" font-size="19.77" fill="#f4f4f4" textLength="51.68" lengthAdjust="spacingAndGlyphs" font-style="italic" >DAB+</text>
<rect x="83.5" y="439.5" width="74" height="27" rx="3" fill="#262626" stroke="#9a9a9a" stroke-width="1"/>
<text x="85.83" y="458" font-size="15.99" fill="#f4f4f4" textLength="27.38" lengthAdjust="spacingAndGlyphs" >12B</text>
<path d="M132 449 L144 449 L138 456.2 Z" fill="#f4f4f4"/>
<line x1="171.5" y1="427" x2="171.5" y2="475.5" stroke="#e0e0e0" stroke-width="1" />
<rect x="172" y="427" width="121.6" height="48.5" fill="#b01818" />
<text x="190.2" y="459.3" font-size="18.9" fill="#f26c6c" textLength="80.42" lengthAdjust="spacingAndGlyphs" >EId: E002</text>
<text x="294.58" y="460.3" font-size="19.19" fill="#e8e83a" textLength="66.97" lengthAdjust="spacingAndGlyphs" >SR DAB</text>
<text x="385.99" y="460.3" font-size="19.19" fill="#ececec" textLength="102.49" lengthAdjust="spacingAndGlyphs" >2019-07-01</text>
<text x="498.76" y="460.3" font-size="19.19" fill="#ececec" textLength="90.84" lengthAdjust="spacingAndGlyphs" >06:23:27 Z</text>
<rect x="687.5" y="439.5" width="30.5" height="27.5" rx="3" fill="#262626" stroke="#9a9a9a" stroke-width="1"/>
<path d="M696.5 449.5 L708.5 449.5 L702.5 456.5 Z" fill="#f4f4f4"/>
<circle cx="762" cy="453" r="14" fill="#1f5c96" />
<circle cx="762" cy="453" r="6.5" fill="#ff1414" />
<circle cx="805.5" cy="453" r="14" fill="#1a3c5e" />
<rect x="800.5" y="446.5" width="10" height="13" fill="#080808" />
<text x="854.88" y="461" font-size="20.06" fill="#f0f0f0" textLength="81.78" lengthAdjust="spacingAndGlyphs" >SId: E20B</text>
<text x="973.69" y="460" font-size="29.36" fill="#f6f600" textLength="231.77" lengthAdjust="spacingAndGlyphs" >SR Knattekanalen</text>
<text x="1241.18" y="461.3" font-size="20.35" fill="#f0f0f0" textLength="80.94" lengthAdjust="spacingAndGlyphs" >184 kbps</text>
<text x="1333.23" y="461.3" font-size="20.35" fill="#f0f0f0" textLength="68.6" lengthAdjust="spacingAndGlyphs" >EEP 3-A</text>
<path d="M1444.3 445.6 H1451.6 L1463.3 436.6 V468.4 L1451.6 459.6 H1444.3 Z M1451.6 445.6 V459.6" fill="none" stroke="#e8e8e8" stroke-width="1.8" stroke-linejoin="round"/>
<rect x="1839.5" y="437.5" width="45" height="26.5" rx="3" fill="#262626" stroke="#8a8a8a" stroke-width="1"/>
<text x="1840.45" y="455.9" font-size="16.28" fill="#f4f4f4" textLength="31.36" lengthAdjust="spacingAndGlyphs" >DAB</text>
<rect x="0" y="475.5" width="1876" height="1.8" fill="#b4c8dc" />
<rect x="0" y="477.3" width="216" height="42.7" fill="#0d2c50" />
<rect x="0" y="520" width="216" height="434" fill="#1a5886" />
<rect x="216" y="477.3" width="6.3" height="476.7" fill="#f0efec" />
<rect x="222.3" y="477.3" width="226.6" height="42.7" fill="#0d2c50" />
<rect x="222.3" y="520" width="226.6" height="434" fill="#1a5886" />
<rect x="448.9" y="477.3" width="4.1" height="476.7" fill="#c4d2e0" />
<rect x="453" y="477.3" width="466" height="42.7" fill="#0d2c50" />
<rect x="453" y="520" width="466" height="434" fill="#1a5886" />
<rect x="919" y="477.3" width="6.4" height="476.7" fill="#f0efec" />
<clipPath id="lclip"><rect x="0" y="477" width="216" height="50"/></clipPath>
<text x="5.48" y="507" font-size="23.84" fill="#f0f000" textLength="216.97" lengthAdjust="spacingAndGlyphs" clip-path="url(#lclip)">SR Knattekanalen</text>
<text x="228.28" y="507" font-size="23.84" fill="#f4f4f4" textLength="180.77" lengthAdjust="spacingAndGlyphs" >Service Quality</text>
<rect x="1.5" y="521.5" width="165.5" height="31" fill="#1f6598" stroke="#3f88c0" stroke-width="1"/>
<text x="7.13" y="544.3" font-size="19.77" fill="#f0f0f0" textLength="154.41" lengthAdjust="spacingAndGlyphs" >SR Knattekanalen</text>
<text x="7.22" y="576.4" font-size="19.77" fill="#f0f0f0" textLength="49.82" lengthAdjust="spacingAndGlyphs" >SR P1</text>
<text x="7.2" y="608.3" font-size="19.77" fill="#f0f0f0" textLength="50.68" lengthAdjust="spacingAndGlyphs" >SR P2</text>
<text x="7.16" y="639.7" font-size="19.77" fill="#f0f0f0" textLength="132.24" lengthAdjust="spacingAndGlyphs" >SR P3 Din Gata</text>
<text x="7.13" y="671.1" font-size="19.77" fill="#f0f0f0" textLength="149.63" lengthAdjust="spacingAndGlyphs" >SR P4 Stockholm</text>
<text x="7.15" y="702.1" font-size="19.77" fill="#f0f0f0" textLength="137.13" lengthAdjust="spacingAndGlyphs" >SR P7 Sisuradio</text>
<text x="235.07" y="556" font-size="18.46" fill="#f0f0f0" textLength="69.24" lengthAdjust="spacingAndGlyphs" >SNR (dB)</text>
<text x="234.45" y="595" font-size="18.46" fill="#f0f0f0" textLength="78.77" lengthAdjust="spacingAndGlyphs" >FIC (ok %)</text>
<text x="234.46" y="632.4" font-size="18.46" fill="#f0f0f0" textLength="74.66" lengthAdjust="spacingAndGlyphs" >RS (ok %)</text>
<text x="234.34" y="671" font-size="18.46" fill="#f0f0f0" textLength="94.95" lengthAdjust="spacingAndGlyphs" >Null Symbol</text>
<text x="235.03" y="709.5" font-size="18.46" fill="#f0f0f0" textLength="133.23" lengthAdjust="spacingAndGlyphs" >SymbolTime (ms)</text>
<text x="234.42" y="746.9" font-size="18.46" fill="#f0f0f0" textLength="124.63" lengthAdjust="spacingAndGlyphs" >FrameTime (ms)</text>
<rect x="384.6" y="533" width="50.2" height="30.6" fill="#858585" />
<rect x="384.6" y="533" width="12.2" height="30.6" fill="#ff0000" />
<text x="399.48" y="554.5" font-size="14.83" fill="#f0f0e0" textLength="20.61" lengthAdjust="spacingAndGlyphs" >8.5</text>
<rect x="384.6" y="572.5" width="50.2" height="30.6" fill="#858585" />
<rect x="384.6" y="572.5" width="50.2" height="30.6" fill="#008000" />
<text x="397.16" y="594" font-size="14.83" fill="#f0f0e0" textLength="24.74" lengthAdjust="spacingAndGlyphs" >100</text>
<rect x="384.6" y="610.8" width="50.2" height="30.6" fill="#858585" />
<rect x="384.6" y="610.8" width="4.6" height="30.6" fill="#ff0000" />
<text x="405.68" y="632.3" font-size="14.83" fill="#f0f0e0" textLength="8.25" lengthAdjust="spacingAndGlyphs" >8</text>
<rect x="384.6" y="649.4" width="50.2" height="30.6" fill="#858585" />
<rect x="384.6" y="649.4" width="50.2" height="30.6" fill="#008000" />
<rect x="384.6" y="686.8" width="50.2" height="30.6" fill="#858585" />
<rect x="384.6" y="686.8" width="13.7" height="30.6" fill="#008000" />
<text x="395.37" y="708.3" font-size="14.83" fill="#f0f0e0" textLength="28.86" lengthAdjust="spacingAndGlyphs" >0.40</text>
<rect x="384.6" y="725.4" width="50.2" height="30.6" fill="#858585" />
<rect x="384.6" y="725.4" width="32.5" height="30.6" fill="#008000" />
<text x="395.31" y="746.9" font-size="14.83" fill="#f0f0e0" textLength="28.86" lengthAdjust="spacingAndGlyphs" >96.0</text>
<path d="M463 519.8 V489.3 Q463 486.3 466 486.3 H526.3 Q536.8 486.3 536.8 496.8 V519.8 Z" fill="#888888"/>
<path d="M463 519.8 V489.3 Q463 486.3 466 486.3 H526.3 Q536.8 486.3 536.8 496.8 V519.8" fill="none" stroke="#9a9a9a" stroke-width="1"/>
<path d="M593 519.8 V489.3 Q593 486.3 596 486.3 H669.3 Q679.8 486.3 679.8 496.8 V519.8 Z" fill="#888888"/>
<path d="M593 519.8 V489.3 Q593 486.3 596 486.3 H669.3 Q679.8 486.3 679.8 496.8 V519.8" fill="none" stroke="#9a9a9a" stroke-width="1"/>
<path d="M681 519.8 V489.3 Q681 486.3 684 486.3 H742 Q752.5 486.3 752.5 496.8 V519.8 Z" fill="#888888"/>
<path d="M681 519.8 V489.3 Q681 486.3 684 486.3 H742 Q752.5 486.3 752.5 496.8 V519.8" fill="none" stroke="#9a9a9a" stroke-width="1"/>
<path d="M754 519.8 V489.3 Q754 486.3 757 486.3 H850.2 Q860.7 486.3 860.7 496.8 V519.8 Z" fill="#888888"/>
<path d="M754 519.8 V489.3 Q754 486.3 757 486.3 H850.2 Q860.7 486.3 860.7 496.8 V519.8" fill="none" stroke="#9a9a9a" stroke-width="1"/>
<path d="M538.4 519.8 V489.3 Q538.4 486.3 541.4 486.3 H581.2 Q591.7 486.3 591.7 496.8 V519.8 Z" fill="#1a5886"/>
<path d="M538.4 519.8 V489.3 Q538.4 486.3 541.4 486.3 H581.2 Q591.7 486.3 591.7 496.8 V519.8" fill="none" stroke="#6a8cb0" stroke-width="1"/>
<rect x="539" y="518.5" width="52.2" height="3" fill="#1a5886" />
<text x="478.11" y="512" font-size="21.8" fill="#dadada" textLength="43.61" lengthAdjust="spacingAndGlyphs" >Sync</text>
<text x="553.65" y="511.8" font-size="21.8" fill="#ffffff" textLength="23.4" lengthAdjust="spacingAndGlyphs" >TII</text>
<text x="609.56" y="512" font-size="21.8" fill="#dadada" textLength="55.55" lengthAdjust="spacingAndGlyphs" >Audio</text>
<text x="697.56" y="512" font-size="21.8" fill="#dadada" textLength="39.77" lengthAdjust="spacingAndGlyphs" >AAC</text>
<text x="768.76" y="512" font-size="21.8" fill="#dadada" textLength="75.84" lengthAdjust="spacingAndGlyphs" >Options</text>
<circle cx="501.7" cy="538" r="5.6" fill="#ff0a0a" />
<rect x="532.6" y="531.8" width="11.4" height="12" fill="#0a2440" />
<line x1="470.9" y1="557" x2="781" y2="557" stroke="#a8b8c8" stroke-width="2" />
<line x1="793.5" y1="519.8" x2="793.5" y2="558" stroke="#5a88b4" stroke-width="1" />
<text x="800.11" y="558.4" font-size="18.9" fill="#f0f0f0" textLength="77.01" lengthAdjust="spacingAndGlyphs" >Threshold</text>
<text x="470.24" y="597.4" font-size="19.91" fill="#f0f0f0" textLength="61.29" lengthAdjust="spacingAndGlyphs" >Pattern</text>
<text x="554.39" y="597.4" font-size="19.91" fill="#f0f0f0" textLength="59.08" lengthAdjust="spacingAndGlyphs" >MainId</text>
<text x="637.35" y="597.4" font-size="19.91" fill="#f0f0f0" textLength="49.17" lengthAdjust="spacingAndGlyphs" >SubId</text>
<text x="709.73" y="597.4" font-size="19.91" fill="#f0f0f0" textLength="72.62" lengthAdjust="spacingAndGlyphs" >Strength</text>
<line x1="470.9" y1="602.4" x2="781" y2="602.4" stroke="#c4ccd6" stroke-width="1.5" />
<line x1="834.7" y1="582" x2="834.7" y2="731.5" stroke="#d8d8d8" stroke-width="2.5" />
<circle cx="834.7" cy="720" r="8" fill="url(#knob)" stroke="#222" stroke-width="0.8"/>
<text x="816.33" y="757.5" font-size="17.44" fill="#f0f0f0" textLength="33.18" lengthAdjust="spacingAndGlyphs" >0.05</text>
<rect x="925.4" y="477.3" width="950.6" height="24" fill="#0d2c50" />
<rect x="925.4" y="501.3" width="950.6" height="215" fill="#000000" />
<rect x="925.4" y="715.5" width="950.6" height="6.5" fill="#888888" />
<text x="1288.79" y="494.8" font-size="19.19" fill="#f0f0f0" textLength="266.81" lengthAdjust="spacingAndGlyphs" >Channel Impulse Response (CIR)</text>
<circle cx="946.1" cy="524.5" r="8" fill="#e0e0e0" />
<text x="957.94" y="531.3" font-size="16.57" fill="#f0f0f0" textLength="44.09" lengthAdjust="spacingAndGlyphs" >Freeze</text>
<circle cx="1034.9" cy="524.5" r="8" fill="#e0e0e0" />
<text x="1047.24" y="531.3" font-size="16.57" fill="#f0f0f0" textLength="57.87" lengthAdjust="spacingAndGlyphs" >Gradient</text>
<text x="942.91" y="581.7" font-size="16.57" fill="#f0f0f0" textLength="112.6" lengthAdjust="spacingAndGlyphs" >Smoothing Level</text>
<line x1="946.9" y1="592.6" x2="946.9" y2="597.5" stroke="#a0a0a0" stroke-width="1" />
<line x1="962.7" y1="592.6" x2="962.7" y2="597.5" stroke="#a0a0a0" stroke-width="1" />
<line x1="978.5" y1="592.6" x2="978.5" y2="597.5" stroke="#a0a0a0" stroke-width="1" />
<line x1="995.7" y1="592.6" x2="995.7" y2="597.5" stroke="#a0a0a0" stroke-width="1" />
<line x1="1011.7" y1="592.6" x2="1011.7" y2="597.5" stroke="#a0a0a0" stroke-width="1" />
<line x1="1028.4" y1="592.6" x2="1028.4" y2="597.5" stroke="#a0a0a0" stroke-width="1" />
<line x1="1044.7" y1="592.6" x2="1044.7" y2="597.5" stroke="#a0a0a0" stroke-width="1" />
<line x1="1060.8" y1="592.6" x2="1060.8" y2="597.5" stroke="#a0a0a0" stroke-width="1" />
<line x1="1077.7" y1="592.6" x2="1077.7" y2="597.5" stroke="#a0a0a0" stroke-width="1" />
<line x1="1093.5" y1="592.6" x2="1093.5" y2="597.5" stroke="#a0a0a0" stroke-width="1" />
<line x1="1109.3" y1="592.6" x2="1109.3" y2="597.5" stroke="#a0a0a0" stroke-width="1" />
<line x1="938.2" y1="605.4" x2="1109.8" y2="605.4" stroke="#eeeeee" stroke-width="2.5" />
<circle cx="1028" cy="605.4" r="7.8" fill="url(#knob)" stroke="#222" stroke-width="0.8"/>
<text x="943.12" y="648.5" font-size="16.57" fill="#f0f0f0" textLength="53.2" lengthAdjust="spacingAndGlyphs" >Zoom X</text>
<line x1="938.2" y1="667.5" x2="1109.8" y2="667.5" stroke="#eeeeee" stroke-width="2.5" />
<circle cx="946.3" cy="667.5" r="7.8" fill="url(#knob)" stroke="#222" stroke-width="0.8"/>
<clipPath id="circlip"><rect x="925" y="501" width="950" height="214.5"/></clipPath>
<text x="943.13" y="711.1" font-size="16.57" fill="#f0f0f0" textLength="52.2" lengthAdjust="spacingAndGlyphs" clip-path="url(#circlip)">Zoom Y</text>
<rect x="1118" y="504" width="5.4" height="124" rx="2.7" fill="#a0a0a0"/>
<line x1="1131.6" y1="501.3" x2="1131.6" y2="715.5" stroke="#333333" stroke-width="1" />
<rect x="1248" y="519.4" width="152.6" height="143.9" fill="#404040" />
<line x1="1248" y1="519.4" x2="1867.3" y2="519.4" stroke="#a8a8a8" stroke-width="1" />
<line x1="1248" y1="548.18" x2="1867.3" y2="548.18" stroke="#a8a8a8" stroke-width="1" />
<line x1="1248" y1="576.96" x2="1867.3" y2="576.96" stroke="#a8a8a8" stroke-width="1" />
<line x1="1248" y1="605.74" x2="1867.3" y2="605.74" stroke="#a8a8a8" stroke-width="1" />
<line x1="1248" y1="634.52" x2="1867.3" y2="634.52" stroke="#a8a8a8" stroke-width="1" />
<line x1="1248" y1="663.3" x2="1867.3" y2="663.3" stroke="#a8a8a8" stroke-width="1" />
<line x1="1276.61" y1="519.4" x2="1276.61" y2="663.3" stroke="#a8a8a8" stroke-width="1" />
<line x1="1317.94" y1="519.4" x2="1317.94" y2="663.3" stroke="#a8a8a8" stroke-width="1" />
<line x1="1359.27" y1="519.4" x2="1359.27" y2="663.3" stroke="#a8a8a8" stroke-width="1" />
<line x1="1441.93" y1="519.4" x2="1441.93" y2="663.3" stroke="#a8a8a8" stroke-width="1" />
<line x1="1483.26" y1="519.4" x2="1483.26" y2="663.3" stroke="#a8a8a8" stroke-width="1" />
<line x1="1524.59" y1="519.4" x2="1524.59" y2="663.3" stroke="#a8a8a8" stroke-width="1" />
<line x1="1565.92" y1="519.4" x2="1565.92" y2="663.3" stroke="#a8a8a8" stroke-width="1" />
<line x1="1607.25" y1="519.4" x2="1607.25" y2="663.3" stroke="#a8a8a8" stroke-width="1" />
<line x1="1648.58" y1="519.4" x2="1648.58" y2="663.3" stroke="#a8a8a8" stroke-width="1" />
<line x1="1689.91" y1="519.4" x2="1689.91" y2="663.3" stroke="#a8a8a8" stroke-width="1" />
<line x1="1731.24" y1="519.4" x2="1731.24" y2="663.3" stroke="#a8a8a8" stroke-width="1" />
<line x1="1772.57" y1="519.4" x2="1772.57" y2="663.3" stroke="#a8a8a8" stroke-width="1" />
<line x1="1813.9" y1="519.4" x2="1813.9" y2="663.3" stroke="#a8a8a8" stroke-width="1" />
<line x1="1855.23" y1="519.4" x2="1855.23" y2="663.3" stroke="#a8a8a8" stroke-width="1" />
<rect x="1248" y="519.4" width="619.3" height="143.9" fill="none" stroke="#a8a8a8" stroke-width="1.2"/>
<line x1="1400.6" y1="519.4" x2="1400.6" y2="663.3" stroke="#e8e860" stroke-width="1" stroke-dasharray="1.5 1.5"/>
<path d="M1252.56 663.08 L1253.39 656.02 L1255.07 662.74 L1257.59 656.86 L1259.27 662.74 L1261.79 656.86 L1263.47 663.08 L1265.15 656.02 L1269.35 651.83 L1272.7 655.18 L1275.22 662.74 L1278.58 661.9 L1282.78 646.45 L1286.97 655.18 L1290.33 651.83 L1293.69 658.54 L1297.05 661.06 L1300.41 662.74 L1302.92 663.08 L1307.12 657.7 L1310.48 660.22 L1313.84 661.06 L1315.52 663.08 L1318.88 663.08 L1322.23 656.86 L1325.59 650.15 L1328.11 663.08 L1330.63 655.18 L1333.99 653.51 L1337.34 655.18 L1340.7 656.86 L1342.38 663.08 L1344.06 655.18 L1344.9 663.08 L1350.78 663.08 L1354.13 653.51 L1357.49 654.35 L1360.85 660.22 L1365.05 661.06 L1367.57 661.9 L1370.08 656.86 L1372.6 662.74 L1375.96 657.7 L1379.32 650.15 L1382.68 660.22 L1386.03 661.06 L1389.39 651.83 L1392.75 649.31 L1395.27 651.83 L1396.95 650.99 L1398.63 643.43 L1400.6 598.8 L1402 601 L1403.3 613 L1404.5 615 L1405.5 624 L1406.5 636 L1407.02 640.07 L1410.38 646.79 L1412.9 651.83 L1417.93 642.59 L1421.29 646.79 L1423.81 645.11 L1427.17 651.83 L1429.69 650.99 L1434.72 650.99 L1438.08 660.22 L1442.28 645.11 L1446.48 653.51 L1449.84 656.86 L1454.03 650.15 L1456.55 661.9 L1459.91 655.18 L1461.59 663.08 L1464.95 658.54 L1468.3 657.7 L1470.82 663.08 L1478.38 663.08 L1480.06 650.15 L1483.42 660.22 L1486.77 655.18 L1490.13 651.83 L1493.49 656.86 L1496.85 654.35 L1500.2 657.7 L1503.56 659.38 L1506.92 655.18 L1510.28 660.22 L1512.8 651.83 L1515.32 663.08 L1520.35 661.06 L1523.71 658.54 L1526.23 652.67 L1528.75 663.08 L1531.27 652.67 L1534.62 660.22 L1537.14 656.86 L1540.5 663.08 L1543.02 656.86 L1545.54 663.08 L1548.9 659.38 L1551.41 652.67 L1553.93 660.22 L1555 656.86 L1558.36 659.38 L1561.72 657.7 L1565.07 656.86 L1567.59 655.18 L1569.27 661.9 L1571.79 661.06 L1574.31 656.86 L1576.83 653.51 L1578.51 662.74 L1581.02 656.02 L1583.54 655.18 L1585.22 653.51 L1587.74 662.74 L1593.62 656.86 L1596.97 657.7 L1600.33 656.86 L1602.01 661.9 L1605.37 655.18 L1607.05 663.08 L1612.09 659.38 L1614.6 649.31 L1617.12 655.18 L1619.64 660.22 L1622.16 657.7 L1623.84 663.08 L1628.88 660.22 L1630.55 663.08 L1634.75 656.02 L1637.27 663.08 L1642.31 660.22 L1645.66 658.54 L1647.34 663.08 L1653.22 661.9 L1655.74 655.18 L1659.1 652.67 L1662.45 655.18 L1665.81 653.51 L1670.01 650.15 L1674.21 661.06 L1678.4 650.99 L1680.92 663.08 L1684.28 653.51 L1687.64 663.08 L1694.36 661.9 L1697.71 653.51 L1702.75 661.06 L1708.63 650.99 L1711.98 657.7 L1715.34 661.9 L1719.54 656.86 L1722.06 663.08 L1727.93 657.7 L1731.29 663.08 L1734.65 658.54 L1738.01 656.86 L1741.37 663.08 L1746.4 653.51 L1749.76 651.83 L1753.12 661.06 L1756.48 650.99 L1759.84 663.08 L1766.55 661.06 L1769.91 659.38 L1773.27 663.08 L1777.46 652.67 L1780.82 648.47 L1784.18 663.08 L1790.06 661.06 L1793.42 653.51 L1796.77 661.9 L1803.49 653.51 L1806.85 655.18 L1810.2 663.08 L1814.4 653.51 L1816.92 663.08 L1820.28 659.38 L1822.8 663.08 L1830.35 659.38 L1833.71 661.9 L1838.75 656.86 L1842.11 658.54 L1846.3 650.99 L1850.5 663.08 L1855.54 659.38 L1860.57 655.18 L1863.93 653.51 L1866.45 659.38" fill="none" stroke="#f0f0f0" stroke-width="1.4" stroke-linejoin="round"/>
<circle cx="1401" cy="598.8" r="5" fill="#f6f000" />
<text x="0" y="0" font-size="15.5" font-weight="bold" fill="#f0f0f0" textLength="113" lengthAdjust="spacingAndGlyphs" text-anchor="middle" transform="translate(1178 592) rotate(-90)">Magnitude (dB)</text>
<text x="1198.14" y="525" font-size="16.28" fill="#f0f0f0" textLength="39.03" lengthAdjust="spacingAndGlyphs" >-10.0</text>
<text x="1198.14" y="553.78" font-size="16.28" fill="#f0f0f0" textLength="39.03" lengthAdjust="spacingAndGlyphs" >-20.0</text>
<text x="1198.14" y="582.56" font-size="16.28" fill="#f0f0f0" textLength="39.03" lengthAdjust="spacingAndGlyphs" >-30.0</text>
<text x="1198.14" y="611.34" font-size="16.28" fill="#f0f0f0" textLength="39.03" lengthAdjust="spacingAndGlyphs" >-40.0</text>
<text x="1198.14" y="640.12" font-size="16.28" fill="#f0f0f0" textLength="39.03" lengthAdjust="spacingAndGlyphs" >-50.0</text>
<text x="1198.14" y="668.9" font-size="16.28" fill="#f0f0f0" textLength="39.03" lengthAdjust="spacingAndGlyphs" >-60.0</text>
<text x="1266.81" y="679.8" font-size="13.52" fill="#f0f0f0" textLength="19.54" lengthAdjust="spacingAndGlyphs" >-60</text>
<text x="1308.14" y="679.8" font-size="13.52" fill="#f0f0f0" textLength="19.54" lengthAdjust="spacingAndGlyphs" >-40</text>
<text x="1349.47" y="679.8" font-size="13.52" fill="#f0f0f0" textLength="19.54" lengthAdjust="spacingAndGlyphs" >-20</text>
<text x="1396.84" y="679.8" font-size="13.52" fill="#f0f0f0" textLength="7.52" lengthAdjust="spacingAndGlyphs" >0</text>
<text x="1434.34" y="679.8" font-size="13.52" fill="#f0f0f0" textLength="15.04" lengthAdjust="spacingAndGlyphs" >20</text>
<text x="1475.85" y="679.8" font-size="13.52" fill="#f0f0f0" textLength="15.04" lengthAdjust="spacingAndGlyphs" >40</text>
<text x="1516.99" y="679.8" font-size="13.52" fill="#f0f0f0" textLength="15.04" lengthAdjust="spacingAndGlyphs" >60</text>
<text x="1558.37" y="679.8" font-size="13.52" fill="#f0f0f0" textLength="15.04" lengthAdjust="spacingAndGlyphs" >80</text>
<text x="1595.72" y="679.8" font-size="13.52" fill="#f0f0f0" textLength="22.55" lengthAdjust="spacingAndGlyphs" >100</text>
<text x="1637.05" y="679.8" font-size="13.52" fill="#f0f0f0" textLength="22.55" lengthAdjust="spacingAndGlyphs" >120</text>
<text x="1678.38" y="679.8" font-size="13.52" fill="#f0f0f0" textLength="22.55" lengthAdjust="spacingAndGlyphs" >140</text>
<text x="1719.71" y="679.8" font-size="13.52" fill="#f0f0f0" textLength="22.55" lengthAdjust="spacingAndGlyphs" >160</text>
<text x="1761.04" y="679.8" font-size="13.52" fill="#f0f0f0" textLength="22.55" lengthAdjust="spacingAndGlyphs" >180</text>
<text x="1802.55" y="679.8" font-size="13.52" fill="#f0f0f0" textLength="22.55" lengthAdjust="spacingAndGlyphs" >200</text>
<text x="1843.88" y="679.8" font-size="13.52" fill="#f0f0f0" textLength="22.55" lengthAdjust="spacingAndGlyphs" >220</text>
<text x="1463.19" y="702.4" font-size="17.44" fill="#f0f0f0" textLength="188.87" lengthAdjust="spacingAndGlyphs" >Distance Difference (km)</text>
<rect x="925.4" y="722" width="950.6" height="25" fill="#0d2c50" />
<rect x="925.4" y="747" width="950.6" height="207" fill="#000000" />
<text x="1378.61" y="739.8" font-size="17.73" fill="#f0f0f0" textLength="87.93" lengthAdjust="spacingAndGlyphs" >TII Carriers</text>
<rect x="1034.5" y="897" width="824.7" height="6" fill="#4a4a4a" />
<line x1="1034.5" y1="792.5" x2="1859.2" y2="792.5" stroke="#a8a8a8" stroke-width="1" />
<line x1="1034.5" y1="820.5" x2="1859.2" y2="820.5" stroke="#a8a8a8" stroke-width="1" />
<line x1="1034.5" y1="848.5" x2="1859.2" y2="848.5" stroke="#a8a8a8" stroke-width="1" />
<line x1="1034.5" y1="876.5" x2="1859.2" y2="876.5" stroke="#a8a8a8" stroke-width="1" />
<line x1="1085.6" y1="764" x2="1085.6" y2="903" stroke="#a8a8a8" stroke-width="1" />
<line x1="1166.2" y1="764" x2="1166.2" y2="903" stroke="#a8a8a8" stroke-width="1" />
<line x1="1246.8" y1="764" x2="1246.8" y2="903" stroke="#a8a8a8" stroke-width="1" />
<line x1="1327.4" y1="764" x2="1327.4" y2="903" stroke="#a8a8a8" stroke-width="1" />
<line x1="1408" y1="764" x2="1408" y2="903" stroke="#a8a8a8" stroke-width="1" />
<line x1="1488.6" y1="764" x2="1488.6" y2="903" stroke="#a8a8a8" stroke-width="1" />
<line x1="1569.2" y1="764" x2="1569.2" y2="903" stroke="#a8a8a8" stroke-width="1" />
<line x1="1649.8" y1="764" x2="1649.8" y2="903" stroke="#a8a8a8" stroke-width="1" />
<line x1="1730.4" y1="764" x2="1730.4" y2="903" stroke="#a8a8a8" stroke-width="1" />
<line x1="1811" y1="764" x2="1811" y2="903" stroke="#a8a8a8" stroke-width="1" />
<line x1="1546.6" y1="764" x2="1546.6" y2="903" stroke="#a8a8a8" stroke-width="1" />
<rect x="1034.5" y="764" width="824.7" height="139" fill="none" stroke="#a0a0a0" stroke-width="1.6"/>
<line x1="1034.5" y1="901.5" x2="1138.3" y2="901.5" stroke="#d0d0d0" stroke-width="1" />
<line x1="1757.3" y1="901.5" x2="1859.2" y2="901.5" stroke="#d0d0d0" stroke-width="1" />
<rect x="1154.8" y="889.1" width="1.6" height="13.9" fill="#b4b4b4" />
<rect x="1166.4" y="872.6" width="1.6" height="30.4" fill="#b4b4b4" />
<rect x="1176.6" y="885.4" width="1.6" height="17.6" fill="#b4b4b4" />
<rect x="1180.4" y="855.5" width="1.6" height="47.5" fill="#b4b4b4" />
<rect x="1181.7" y="884" width="1.6" height="19" fill="#b4b4b4" />
<rect x="1187.5" y="883.2" width="1.6" height="19.8" fill="#b4b4b4" />
<rect x="1190.6" y="900.5" width="1.6" height="2.5" fill="#b4b4b4" />
<rect x="1214.5" y="876.5" width="1.6" height="26.5" fill="#b4b4b4" />
<rect x="1228.2" y="886.2" width="1.6" height="16.8" fill="#b4b4b4" />
<rect x="1256.8" y="899" width="1.6" height="4" fill="#b4b4b4" />
<rect x="1274.2" y="843" width="1.6" height="60" fill="#b4b4b4" />
<rect x="1292.95" y="783" width="1.6" height="120" fill="#b4b4b4" />
<rect x="1307.8" y="862.3" width="1.6" height="40.7" fill="#b4b4b4" />
<rect x="1316.8" y="890.5" width="1.6" height="12.5" fill="#b4b4b4" />
<rect x="1319.1" y="850" width="1.6" height="53" fill="#b4b4b4" />
<rect x="1321.1" y="865.8" width="1.6" height="37.2" fill="#b4b4b4" />
<rect x="1345" y="877.7" width="1.6" height="25.3" fill="#b4b4b4" />
<rect x="1349.8" y="818.8" width="1.6" height="84.2" fill="#b4b4b4" />
<rect x="1364.2" y="896" width="1.6" height="7" fill="#b4b4b4" />
<rect x="1365.2" y="886" width="1.6" height="17" fill="#b4b4b4" />
<rect x="1367.2" y="884" width="1.6" height="19" fill="#b4b4b4" />
<rect x="1378.2" y="896" width="1.6" height="7" fill="#b4b4b4" />
<rect x="1379.4" y="833.7" width="1.6" height="69.3" fill="#b4b4b4" />
<rect x="1383.9" y="838.1" width="1.6" height="64.9" fill="#b4b4b4" />
<rect x="1398.4" y="875.5" width="1.6" height="27.5" fill="#b4b4b4" />
<rect x="1403.5" y="867.8" width="1.6" height="35.2" fill="#b4b4b4" />
<rect x="1404.7" y="869.5" width="1.6" height="33.5" fill="#b4b4b4" />
<rect x="1415.8" y="845" width="1.6" height="58" fill="#b4b4b4" />
<rect x="1443.1" y="862" width="1.6" height="41" fill="#b4b4b4" />
<rect x="1471.2" y="895" width="1.6" height="8" fill="#b4b4b4" />
<rect x="1485.2" y="895.5" width="1.6" height="7.5" fill="#b4b4b4" />
<rect x="1490.2" y="896" width="1.6" height="7" fill="#b4b4b4" />
<rect x="1501.2" y="897.5" width="1.6" height="5.5" fill="#b4b4b4" />
<rect x="1511.7" y="890.5" width="1.6" height="12.5" fill="#b4b4b4" />
<rect x="1516" y="885.9" width="1.6" height="17.1" fill="#b4b4b4" />
<rect x="1524" y="827" width="1.6" height="76" fill="#b4b4b4" />
<rect x="1529.1" y="881.6" width="1.6" height="21.4" fill="#b4b4b4" />
<rect x="1536.1" y="844" width="1.6" height="59" fill="#b4b4b4" />
<rect x="1540.4" y="895.5" width="1.6" height="7.5" fill="#b4b4b4" />
<rect x="1546.2" y="871.7" width="1.6" height="31.3" fill="#b4b4b4" />
<rect x="1550.4" y="864.6" width="1.6" height="38.4" fill="#b4b4b4" />
<rect x="1575.7" y="894.6" width="1.6" height="8.4" fill="#b4b4b4" />
<rect x="1597.8" y="883.7" width="1.6" height="19.3" fill="#b4b4b4" />
<rect x="1607.6" y="896" width="1.6" height="7" fill="#b4b4b4" />
<rect x="1615.7" y="833.3" width="1.6" height="69.7" fill="#b4b4b4" />
<rect x="1620.9" y="853.5" width="1.6" height="49.5" fill="#b4b4b4" />
<rect x="1659.6" y="875.5" width="1.6" height="27.5" fill="#b4b4b4" />
<rect x="1672" y="867.1" width="1.6" height="35.9" fill="#b4b4b4" />
<rect x="1684.3" y="865.2" width="1.6" height="37.8" fill="#b4b4b4" />
<rect x="1697.6" y="890" width="1.6" height="13" fill="#b4b4b4" />
<rect x="1716.4" y="895" width="1.6" height="8" fill="#b4b4b4" />
<rect x="1721" y="874" width="1.6" height="29" fill="#b4b4b4" />
<rect x="1740.2" y="900.5" width="1.6" height="2.5" fill="#b4b4b4" />
<line x1="1125.2" y1="764" x2="1125.2" y2="904" stroke="#d02020" stroke-width="1.1" />
<line x1="1138" y1="766.5" x2="1138" y2="903" stroke="#e8e850" stroke-width="2.5" stroke-dasharray="2.5 1.5"/>
<line x1="1292.75" y1="766.5" x2="1292.75" y2="903" stroke="#e8e850" stroke-width="2.5" stroke-dasharray="2.5 1.5"/>
<line x1="1447.5" y1="766.5" x2="1447.5" y2="903" stroke="#e8e850" stroke-width="2.5" stroke-dasharray="2.5 1.5"/>
<line x1="1602.25" y1="766.5" x2="1602.25" y2="903" stroke="#e8e850" stroke-width="2.5" stroke-dasharray="2.5 1.5"/>
<line x1="1757" y1="766.5" x2="1757" y2="903" stroke="#e8e850" stroke-width="2.5" stroke-dasharray="2.5 1.5"/>
<text x="0" y="0" font-size="15" font-weight="bold" fill="#f0f0f0" textLength="76" lengthAdjust="spacingAndGlyphs" text-anchor="middle" transform="translate(979.5 834.5) rotate(-90)">Magnitude</text>
<text x="1000.2" y="769.7" font-size="15.99" fill="#f0f0f0" textLength="22.23" lengthAdjust="spacingAndGlyphs" >1.0</text>
<text x="1000.27" y="797.6" font-size="15.99" fill="#f0f0f0" textLength="22.23" lengthAdjust="spacingAndGlyphs" >0.8</text>
<text x="1000.28" y="825.5" font-size="15.99" fill="#f0f0f0" textLength="22.23" lengthAdjust="spacingAndGlyphs" >0.6</text>
<text x="1000.04" y="853.4" font-size="15.99" fill="#f0f0f0" textLength="22.23" lengthAdjust="spacingAndGlyphs" >0.4</text>
<text x="1000.38" y="881.3" font-size="15.99" fill="#f0f0f0" textLength="22.23" lengthAdjust="spacingAndGlyphs" >0.2</text>
<text x="1000.2" y="909.2" font-size="15.99" fill="#f0f0f0" textLength="22.23" lengthAdjust="spacingAndGlyphs" >0.0</text>
<text x="1069.27" y="921.7" font-size="16.28" fill="#f0f0f0" textLength="32.58" lengthAdjust="spacingAndGlyphs" >-900</text>
<text x="1149.87" y="921.7" font-size="16.28" fill="#f0f0f0" textLength="32.58" lengthAdjust="spacingAndGlyphs" >-700</text>
<text x="1230.47" y="921.7" font-size="16.28" fill="#f0f0f0" textLength="32.58" lengthAdjust="spacingAndGlyphs" >-500</text>
<text x="1311.07" y="921.7" font-size="16.28" fill="#f0f0f0" textLength="32.58" lengthAdjust="spacingAndGlyphs" >-300</text>
<text x="1391.67" y="921.7" font-size="16.28" fill="#f0f0f0" textLength="32.58" lengthAdjust="spacingAndGlyphs" >-100</text>
<text x="1474.72" y="921.7" font-size="16.28" fill="#f0f0f0" textLength="27.16" lengthAdjust="spacingAndGlyphs" >100</text>
<text x="1555.63" y="921.7" font-size="16.28" fill="#f0f0f0" textLength="27.16" lengthAdjust="spacingAndGlyphs" >300</text>
<text x="1636.21" y="921.7" font-size="16.28" fill="#f0f0f0" textLength="27.16" lengthAdjust="spacingAndGlyphs" >500</text>
<text x="1716.72" y="921.7" font-size="16.28" fill="#f0f0f0" textLength="27.16" lengthAdjust="spacingAndGlyphs" >700</text>
<text x="1797.36" y="921.7" font-size="16.28" fill="#f0f0f0" textLength="27.16" lengthAdjust="spacingAndGlyphs" >900</text>
<text x="1396.92" y="945.7" font-size="17.01" fill="#f0f0f0" textLength="101.66" lengthAdjust="spacingAndGlyphs" >TII Subcarrier</text>
</svg></body></html>
